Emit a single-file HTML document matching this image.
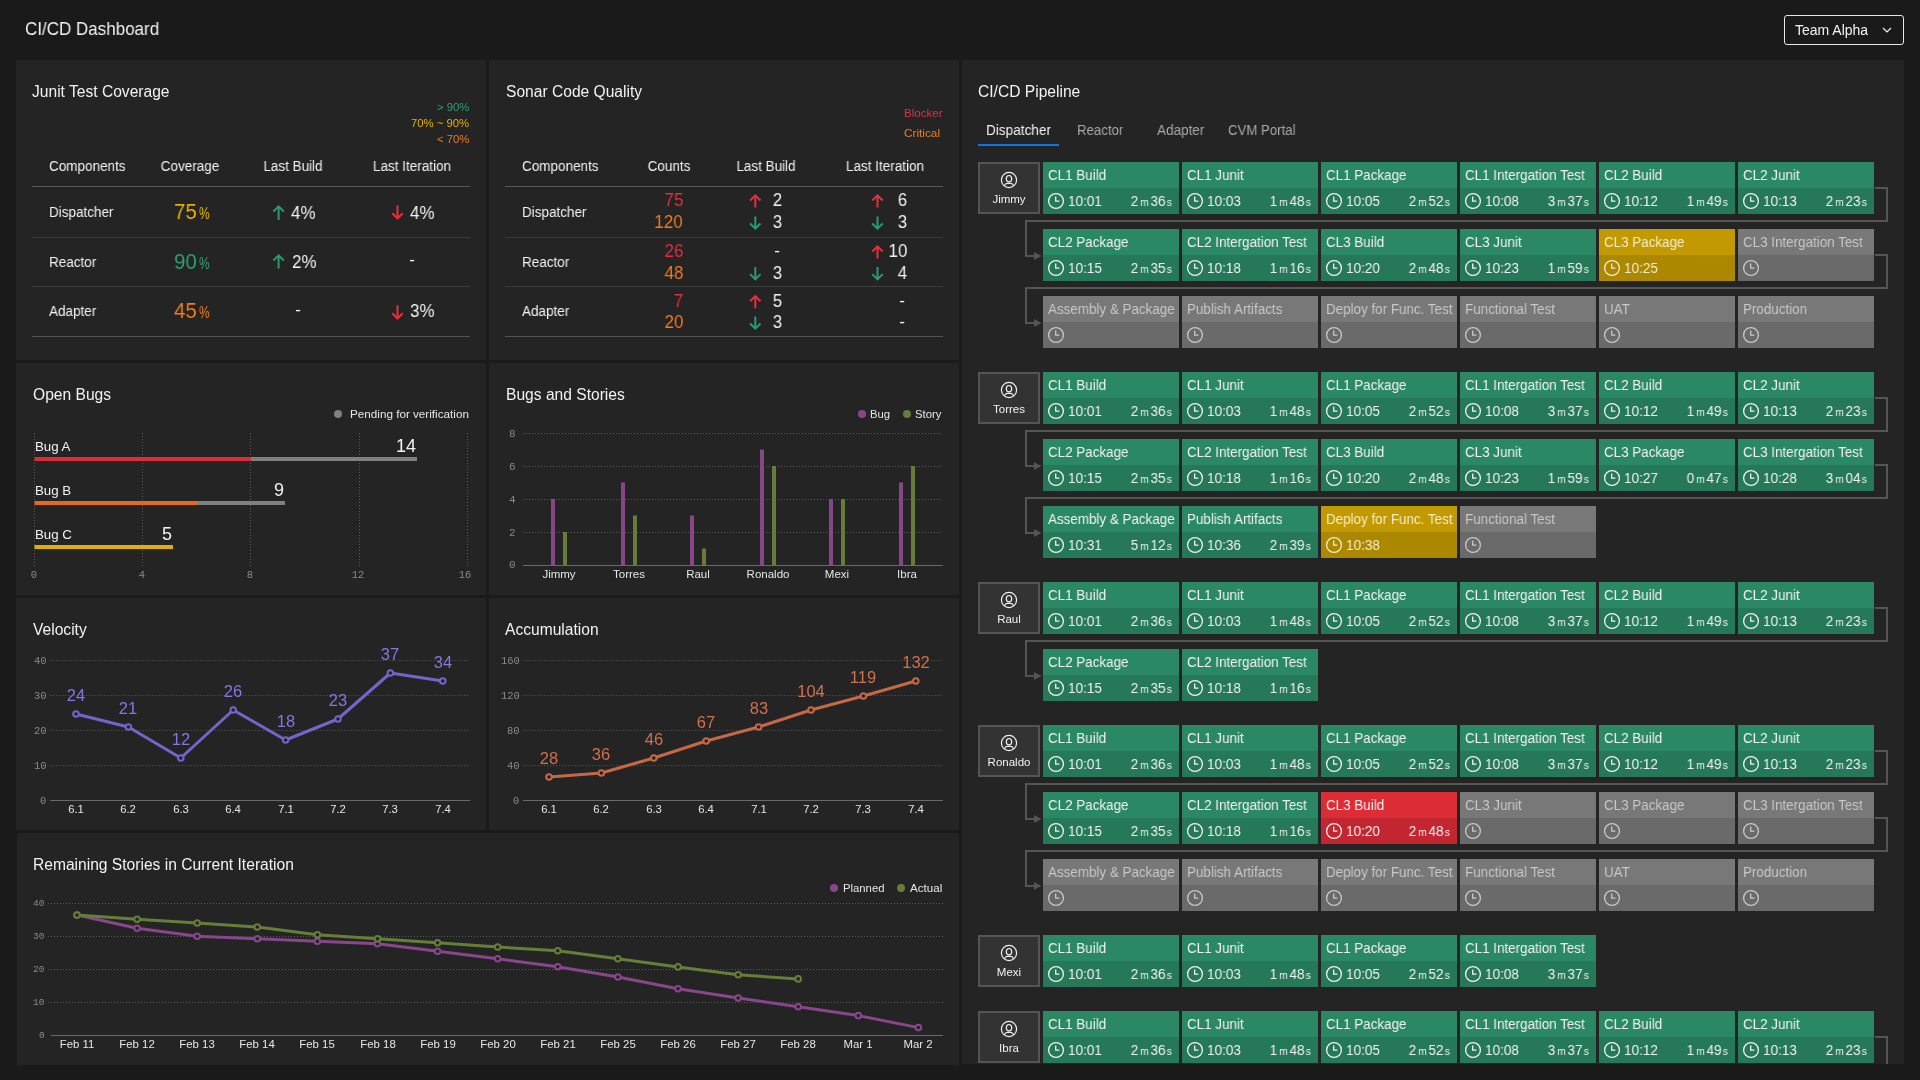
<!DOCTYPE html>
<html><head><meta charset="utf-8"><title>CI/CD Dashboard</title>
<style>
html,body{margin:0;padding:0;}
body{width:1920px;height:1080px;overflow:hidden;background:#1a1a1a;position:relative;font-family:'Liberation Sans', sans-serif;}
.t{position:absolute;line-height:1;white-space:nowrap;will-change:transform;}
.r{position:absolute;}
.panel{position:absolute;background:#242424;}
svg{position:absolute;left:0;top:0;overflow:visible;}
.tile{position:absolute;width:136px;height:52px;}
.tile .h{position:absolute;left:0;top:0;width:136px;height:26px;}
.tile .b{position:absolute;left:0;top:26px;width:136px;height:26px;}
</style></head><body>

<div class="t" style="top:20px;font-size:18.36px;color:#f2f2f2;left:24.50px;transform:scaleX(0.9259);transform-origin:left 0;">CI/CD Dashboard</div>
<div class="r" style="left:1784px;top:15px;width:118px;height:28px;border:1px solid #e8e8e8;border-radius:3px;"></div>
<div class="t" style="top:23px;font-size:14.0px;color:#f2f2f2;left:1794.50px;">Team Alpha</div>
<svg width="1920" height="60" style="left:0;top:0"><polyline points="1883,28 1887,32 1891,28" fill="none" stroke="#f2f2f2" stroke-width="1.2"/></svg>
<div class="panel" style="left:16px;top:60px;width:470px;height:300px;"></div>
<div class="panel" style="left:489px;top:60px;width:470px;height:300px;"></div>
<div class="panel" style="left:16px;top:363px;width:470px;height:232px;"></div>
<div class="panel" style="left:489px;top:363px;width:470px;height:232px;"></div>
<div class="panel" style="left:16px;top:598px;width:470px;height:232px;"></div>
<div class="panel" style="left:489px;top:598px;width:470px;height:232px;"></div>
<div class="panel" style="left:17px;top:833px;width:942px;height:232px;"></div>
<div class="panel" style="left:962px;top:60px;width:942px;height:1004px;"></div>
<div class="t" style="top:84px;font-size:15.6px;color:#f2f2f2;left:32.30px;">Junit Test Coverage</div>
<div class="t" style="top:84px;font-size:15.6px;color:#f2f2f2;left:505.60px;">Sonar Code Quality</div>
<div class="t" style="top:387px;font-size:15.6px;color:#f2f2f2;left:33.00px;">Open Bugs</div>
<div class="t" style="top:387px;font-size:15.6px;color:#f2f2f2;left:505.50px;">Bugs and Stories</div>
<div class="t" style="top:622px;font-size:15.6px;color:#f2f2f2;left:32.50px;">Velocity</div>
<div class="t" style="top:622px;font-size:15.6px;color:#f2f2f2;left:505.00px;">Accumulation</div>
<div class="t" style="top:857px;font-size:15.6px;color:#f2f2f2;left:33.30px;">Remaining Stories in Current Iteration</div>
<div class="t" style="top:84px;font-size:15.6px;color:#f2f2f2;left:978.30px;">CI/CD Pipeline</div>
<div class="t" style="top:102px;font-size:11.3px;color:#2f9f76;right:1450.50px;text-align:right;">&gt; 90%</div>
<div class="t" style="top:118px;font-size:11.3px;color:#e6b000;right:1450.50px;text-align:right;">70% ~ 90%</div>
<div class="t" style="top:134px;font-size:11.3px;color:#ee7a22;right:1450.50px;text-align:right;">&lt; 70%</div>
<div class="t" style="top:159px;font-size:14.72px;color:#f2f2f2;left:48.50px;transform:scaleX(0.9174);transform-origin:left 0;">Components</div>
<div class="t" style="top:159px;font-size:14.72px;color:#f2f2f2;left:40.00px;width:300px;text-align:center;transform:scaleX(0.9174);transform-origin:center 0;">Coverage</div>
<div class="t" style="top:159px;font-size:14.72px;color:#f2f2f2;left:142.50px;width:300px;text-align:center;transform:scaleX(0.9174);transform-origin:center 0;">Last Build</div>
<div class="t" style="top:159px;font-size:14.72px;color:#f2f2f2;left:261.70px;width:300px;text-align:center;transform:scaleX(0.9174);transform-origin:center 0;">Last Iteration</div>
<div class="r" style="left:32px;top:186px;width:438px;height:1px;background:#595959;"></div>
<div class="r" style="left:32px;top:237px;width:438px;height:1px;background:#3b3b3b;"></div>
<div class="r" style="left:32px;top:286px;width:438px;height:1px;background:#3b3b3b;"></div>
<div class="r" style="left:32px;top:336px;width:438px;height:1px;background:#535353;"></div>
<div class="t" style="top:205px;font-size:14.58px;color:#f2f2f2;left:48.50px;transform:scaleX(0.9259);transform-origin:left 0;">Dispatcher</div>
<div class="t" style="top:255px;font-size:14.58px;color:#f2f2f2;left:48.50px;transform:scaleX(0.9259);transform-origin:left 0;">Reactor</div>
<div class="t" style="top:304px;font-size:14.58px;color:#f2f2f2;left:48.50px;transform:scaleX(0.9259);transform-origin:left 0;">Adapter</div>
<div class="t" style="top:201px;font-size:22.55px;color:#e6b000;left:173.50px;transform:scaleX(0.9091);transform-origin:left 0;">75</div>
<div class="t" style="top:206px;font-size:15.6px;color:#e6b000;left:199.40px;transform:scaleX(0.7692);transform-origin:left 0;">%</div>
<div class="t" style="top:251px;font-size:22.55px;color:#2f9f76;left:173.50px;transform:scaleX(0.9091);transform-origin:left 0;">90</div>
<div class="t" style="top:256px;font-size:15.6px;color:#2f9f76;left:199.40px;transform:scaleX(0.7692);transform-origin:left 0;">%</div>
<div class="t" style="top:300px;font-size:22.55px;color:#ee7a22;left:173.50px;transform:scaleX(0.9091);transform-origin:left 0;">45</div>
<div class="t" style="top:305px;font-size:15.6px;color:#ee7a22;left:199.40px;transform:scaleX(0.7692);transform-origin:left 0;">%</div>
<div class="t" style="top:204px;font-size:18.36px;color:#f2f2f2;left:290.50px;transform:scaleX(0.9259);transform-origin:left 0;">4%</div>
<div class="t" style="top:253px;font-size:18.36px;color:#f2f2f2;left:291.50px;transform:scaleX(0.9259);transform-origin:left 0;">2%</div>
<div class="t" style="top:301px;font-size:17.0px;color:#f2f2f2;left:148.40px;width:300px;text-align:center;">-</div>
<div class="t" style="top:204px;font-size:18.36px;color:#f2f2f2;left:409.50px;transform:scaleX(0.9259);transform-origin:left 0;">4%</div>
<div class="t" style="top:251px;font-size:17.0px;color:#f2f2f2;left:262.40px;width:300px;text-align:center;">-</div>
<div class="t" style="top:302px;font-size:18.36px;color:#f2f2f2;left:409.50px;transform:scaleX(0.9259);transform-origin:left 0;">3%</div>
<div class="t" style="top:107px;font-size:11.6px;color:#e3303c;left:903.60px;">Blocker</div>
<div class="t" style="top:128px;font-size:11.8px;color:#ee7a22;left:903.60px;">Critical</div>
<div class="t" style="top:159px;font-size:14.72px;color:#f2f2f2;left:521.50px;transform:scaleX(0.9174);transform-origin:left 0;">Components</div>
<div class="t" style="top:159px;font-size:14.72px;color:#f2f2f2;left:519.20px;width:300px;text-align:center;transform:scaleX(0.9174);transform-origin:center 0;">Counts</div>
<div class="t" style="top:159px;font-size:14.72px;color:#f2f2f2;left:615.60px;width:300px;text-align:center;transform:scaleX(0.9174);transform-origin:center 0;">Last Build</div>
<div class="t" style="top:159px;font-size:14.72px;color:#f2f2f2;left:734.90px;width:300px;text-align:center;transform:scaleX(0.9174);transform-origin:center 0;">Last Iteration</div>
<div class="r" style="left:505px;top:186px;width:438px;height:1px;background:#595959;"></div>
<div class="r" style="left:505px;top:237px;width:438px;height:1px;background:#3b3b3b;"></div>
<div class="r" style="left:505px;top:286px;width:438px;height:1px;background:#3b3b3b;"></div>
<div class="r" style="left:505px;top:336px;width:438px;height:1px;background:#535353;"></div>
<div class="t" style="top:205px;font-size:14.58px;color:#f2f2f2;left:521.50px;transform:scaleX(0.9259);transform-origin:left 0;">Dispatcher</div>
<div class="t" style="top:255px;font-size:14.58px;color:#f2f2f2;left:521.50px;transform:scaleX(0.9259);transform-origin:left 0;">Reactor</div>
<div class="t" style="top:304px;font-size:14.58px;color:#f2f2f2;left:521.50px;transform:scaleX(0.9259);transform-origin:left 0;">Adapter</div>
<div class="t" style="top:191px;font-size:18.36px;color:#e3303c;right:1237.00px;text-align:right;transform:scaleX(0.9259);transform-origin:right 0;">75</div>
<div class="t" style="top:213px;font-size:18.36px;color:#ee7a22;right:1237.00px;text-align:right;transform:scaleX(0.9259);transform-origin:right 0;">120</div>
<div class="t" style="top:242px;font-size:18.36px;color:#e3303c;right:1237.00px;text-align:right;transform:scaleX(0.9259);transform-origin:right 0;">26</div>
<div class="t" style="top:264px;font-size:18.36px;color:#ee7a22;right:1237.00px;text-align:right;transform:scaleX(0.9259);transform-origin:right 0;">48</div>
<div class="t" style="top:292px;font-size:18.36px;color:#e3303c;right:1237.00px;text-align:right;transform:scaleX(0.9259);transform-origin:right 0;">7</div>
<div class="t" style="top:313px;font-size:18.36px;color:#ee7a22;right:1237.00px;text-align:right;transform:scaleX(0.9259);transform-origin:right 0;">20</div>
<div class="t" style="top:191px;font-size:18.36px;color:#f2f2f2;right:1138.00px;text-align:right;transform:scaleX(0.9259);transform-origin:right 0;">2</div>
<div class="t" style="top:191px;font-size:18.36px;color:#f2f2f2;right:1013.00px;text-align:right;transform:scaleX(0.9259);transform-origin:right 0;">6</div>
<div class="t" style="top:213px;font-size:18.36px;color:#f2f2f2;right:1138.00px;text-align:right;transform:scaleX(0.9259);transform-origin:right 0;">3</div>
<div class="t" style="top:213px;font-size:18.36px;color:#f2f2f2;right:1013.00px;text-align:right;transform:scaleX(0.9259);transform-origin:right 0;">3</div>
<div class="t" style="top:242px;font-size:17.0px;color:#f2f2f2;left:627.40px;width:300px;text-align:center;">-</div>
<div class="t" style="top:242px;font-size:18.36px;color:#f2f2f2;right:1013.00px;text-align:right;transform:scaleX(0.9259);transform-origin:right 0;">10</div>
<div class="t" style="top:264px;font-size:18.36px;color:#f2f2f2;right:1138.00px;text-align:right;transform:scaleX(0.9259);transform-origin:right 0;">3</div>
<div class="t" style="top:264px;font-size:18.36px;color:#f2f2f2;right:1013.00px;text-align:right;transform:scaleX(0.9259);transform-origin:right 0;">4</div>
<div class="t" style="top:292px;font-size:18.36px;color:#f2f2f2;right:1138.00px;text-align:right;transform:scaleX(0.9259);transform-origin:right 0;">5</div>
<div class="t" style="top:292px;font-size:17.0px;color:#f2f2f2;left:751.80px;width:300px;text-align:center;">-</div>
<div class="t" style="top:313px;font-size:18.36px;color:#f2f2f2;right:1138.00px;text-align:right;transform:scaleX(0.9259);transform-origin:right 0;">3</div>
<div class="t" style="top:313px;font-size:17.0px;color:#f2f2f2;left:751.80px;width:300px;text-align:center;">-</div>
<svg width="1920" height="400"><path d="M278.6,220.0 L278.6,206.7 M273.40000000000003,211.5 L278.6,206.3 L283.8,211.5" fill="none" stroke="#2a9a70" stroke-width="2"/><path d="M278.6,268.5 L278.6,255.7 M273.40000000000003,260.5 L278.6,255.3 L283.8,260.5" fill="none" stroke="#2a9a70" stroke-width="2"/><path d="M397.5,205.3 L397.5,218.10000000000002 M392.3,213.3 L397.5,218.5 L402.7,213.3" fill="none" stroke="#e5303c" stroke-width="2"/><path d="M397.5,305.3 L397.5,318.1 M392.3,313.3 L397.5,318.5 L402.7,313.3" fill="none" stroke="#e5303c" stroke-width="2"/><path d="M755.3,207.5 L755.3,195.7 M750.0999999999999,200.5 L755.3,195.3 L760.5,200.5" fill="none" stroke="#e5303c" stroke-width="2"/><path d="M877.5,207.5 L877.5,195.7 M872.3,200.5 L877.5,195.3 L882.7,200.5" fill="none" stroke="#e5303c" stroke-width="2"/><path d="M755.3,216.5 L755.3,228.3 M750.0999999999999,223.5 L755.3,228.7 L760.5,223.5" fill="none" stroke="#2a9a70" stroke-width="2"/><path d="M877.5,216.5 L877.5,228.3 M872.3,223.5 L877.5,228.7 L882.7,223.5" fill="none" stroke="#2a9a70" stroke-width="2"/><path d="M877.5,258.5 L877.5,246.7 M872.3,251.5 L877.5,246.3 L882.7,251.5" fill="none" stroke="#e5303c" stroke-width="2"/><path d="M755.3,267.1 L755.3,278.90000000000003 M750.0999999999999,274.1 L755.3,279.3 L760.5,274.1" fill="none" stroke="#2a9a70" stroke-width="2"/><path d="M877.5,267.1 L877.5,278.90000000000003 M872.3,274.1 L877.5,279.3 L882.7,274.1" fill="none" stroke="#2a9a70" stroke-width="2"/><path d="M755.3,308.3 L755.3,296.5 M750.0999999999999,301.3 L755.3,296.1 L760.5,301.3" fill="none" stroke="#e5303c" stroke-width="2"/><path d="M755.3,316.5 L755.3,328.3 M750.0999999999999,323.5 L755.3,328.7 L760.5,323.5" fill="none" stroke="#2a9a70" stroke-width="2"/></svg>
<svg width="1920" height="600"><circle cx="338" cy="414" r="4" fill="#808080"/><line x1="34.5" y1="433" x2="34.5" y2="566" stroke="#5a5a5a" stroke-width="1" stroke-dasharray="1 2"/><line x1="142.5" y1="433" x2="142.5" y2="566" stroke="#5a5a5a" stroke-width="1" stroke-dasharray="1 2"/><line x1="250.5" y1="433" x2="250.5" y2="566" stroke="#5a5a5a" stroke-width="1" stroke-dasharray="1 2"/><line x1="359.5" y1="433" x2="359.5" y2="566" stroke="#5a5a5a" stroke-width="1" stroke-dasharray="1 2"/><line x1="467.5" y1="433" x2="467.5" y2="566" stroke="#5a5a5a" stroke-width="1" stroke-dasharray="1 2"/><rect x="34.5" y="457" width="216.5" height="4" fill="#dc2d37"/><rect x="251" y="457" width="166" height="4" fill="#808080"/><rect x="34.5" y="501" width="162.5" height="4" fill="#e46a1c"/><rect x="197" y="501" width="88" height="4" fill="#808080"/><rect x="34.5" y="545" width="138.5" height="4" fill="#e0b000"/></svg>
<div class="t" style="top:408px;font-size:11.7px;color:#e6e6e6;left:349.80px;">Pending for verification</div>
<div class="t" style="top:440px;font-size:13.3px;color:#f2f2f2;left:35.40px;">Bug A</div>
<div class="t" style="top:484px;font-size:13.3px;color:#f2f2f2;left:35.40px;">Bug B</div>
<div class="t" style="top:528px;font-size:13.3px;color:#f2f2f2;left:35.40px;">Bug C</div>
<div class="t" style="top:437px;font-size:18.0px;color:#f2f2f2;right:1503.50px;text-align:right;">14</div>
<div class="t" style="top:481px;font-size:18.0px;color:#f2f2f2;right:1636.20px;text-align:right;">9</div>
<div class="t" style="top:525px;font-size:18.0px;color:#f2f2f2;right:1748.20px;text-align:right;">5</div>
<div class="t" style="top:570px;font-size:10.5px;color:#8a8a8a;font-family:'Liberation Mono', monospace;left:-115.60px;width:300px;text-align:center;">0</div>
<div class="t" style="top:570px;font-size:10.5px;color:#8a8a8a;font-family:'Liberation Mono', monospace;left:-7.60px;width:300px;text-align:center;">4</div>
<div class="t" style="top:570px;font-size:10.5px;color:#8a8a8a;font-family:'Liberation Mono', monospace;left:100.40px;width:300px;text-align:center;">8</div>
<div class="t" style="top:570px;font-size:10.5px;color:#8a8a8a;font-family:'Liberation Mono', monospace;left:207.90px;width:300px;text-align:center;">12</div>
<div class="t" style="top:570px;font-size:10.5px;color:#8a8a8a;font-family:'Liberation Mono', monospace;left:314.80px;width:300px;text-align:center;">16</div>
<svg width="1920" height="600"><line x1="523" y1="433.5" x2="942" y2="433.5" stroke="#5a5a5a" stroke-width="1" stroke-dasharray="1 2"/><line x1="523" y1="466.5" x2="942" y2="466.5" stroke="#5a5a5a" stroke-width="1" stroke-dasharray="1 2"/><line x1="523" y1="499.5" x2="942" y2="499.5" stroke="#5a5a5a" stroke-width="1" stroke-dasharray="1 2"/><line x1="523" y1="532.5" x2="942" y2="532.5" stroke="#5a5a5a" stroke-width="1" stroke-dasharray="1 2"/><line x1="523" y1="565.5" x2="943" y2="565.5" stroke="#6a6a6a" stroke-width="1"/><rect x="551" y="499.0" width="4" height="66.0" fill="#874787"/><rect x="563" y="532.0" width="4" height="33.0" fill="#677b3b"/><rect x="621" y="482.5" width="4" height="82.5" fill="#874787"/><rect x="633" y="515.5" width="4" height="49.5" fill="#677b3b"/><rect x="690" y="515.5" width="4" height="49.5" fill="#874787"/><rect x="702" y="548.5" width="4" height="16.5" fill="#677b3b"/><rect x="760" y="449.5" width="4" height="115.5" fill="#874787"/><rect x="772" y="466.0" width="4" height="99.0" fill="#677b3b"/><rect x="829" y="499.0" width="4" height="66.0" fill="#874787"/><rect x="841" y="499.0" width="4" height="66.0" fill="#677b3b"/><rect x="899" y="482.5" width="4" height="82.5" fill="#874787"/><rect x="911" y="466.0" width="4" height="99.0" fill="#677b3b"/><circle cx="862" cy="414" r="4" fill="#874787"/><circle cx="907" cy="414" r="4" fill="#677b3b"/></svg>
<div class="t" style="top:409px;font-size:11.3px;color:#e6e6e6;left:870.40px;">Bug</div>
<div class="t" style="top:409px;font-size:11.3px;color:#e6e6e6;left:915.30px;">Story</div>
<div class="t" style="top:429px;font-size:11.0px;color:#8a8a8a;font-family:'Liberation Mono', monospace;right:1404.20px;text-align:right;">8</div>
<div class="t" style="top:462px;font-size:11.0px;color:#8a8a8a;font-family:'Liberation Mono', monospace;right:1404.20px;text-align:right;">6</div>
<div class="t" style="top:495px;font-size:11.0px;color:#8a8a8a;font-family:'Liberation Mono', monospace;right:1404.20px;text-align:right;">4</div>
<div class="t" style="top:528px;font-size:11.0px;color:#8a8a8a;font-family:'Liberation Mono', monospace;right:1404.20px;text-align:right;">2</div>
<div class="t" style="top:560px;font-size:11.0px;color:#8a8a8a;font-family:'Liberation Mono', monospace;right:1404.20px;text-align:right;">0</div>
<div class="t" style="top:569px;font-size:11.5px;color:#e6e6e6;left:409.00px;width:300px;text-align:center;">Jimmy</div>
<div class="t" style="top:569px;font-size:11.5px;color:#e6e6e6;left:479.00px;width:300px;text-align:center;">Torres</div>
<div class="t" style="top:569px;font-size:11.5px;color:#e6e6e6;left:548.00px;width:300px;text-align:center;">Raul</div>
<div class="t" style="top:569px;font-size:11.5px;color:#e6e6e6;left:618.00px;width:300px;text-align:center;">Ronaldo</div>
<div class="t" style="top:569px;font-size:11.5px;color:#e6e6e6;left:687.00px;width:300px;text-align:center;">Mexi</div>
<div class="t" style="top:569px;font-size:11.5px;color:#e6e6e6;left:757.00px;width:300px;text-align:center;">Ibra</div>
<svg width="1920" height="840"><line x1="50.2" y1="660.5" x2="468.5" y2="660.5" stroke="#5a5a5a" stroke-width="1" stroke-dasharray="1 2"/><line x1="50.2" y1="695.5" x2="468.5" y2="695.5" stroke="#5a5a5a" stroke-width="1" stroke-dasharray="1 2"/><line x1="50.2" y1="730.5" x2="468.5" y2="730.5" stroke="#5a5a5a" stroke-width="1" stroke-dasharray="1 2"/><line x1="50.2" y1="765.5" x2="468.5" y2="765.5" stroke="#5a5a5a" stroke-width="1" stroke-dasharray="1 2"/><line x1="50.2" y1="800.5" x2="470.0" y2="800.5" stroke="#6a6a6a" stroke-width="1"/><polyline points="76.0,714 128.4,727 180.8,758 233.2,710 285.6,740 338.0,719 390.4,673 442.8,681" fill="none" stroke="#7664cd" stroke-width="3" stroke-linejoin="round"/><circle cx="76.0" cy="714" r="2.8" fill="#242424" stroke="#7664cd" stroke-width="2"/><circle cx="128.4" cy="727" r="2.8" fill="#242424" stroke="#7664cd" stroke-width="2"/><circle cx="180.8" cy="758" r="2.8" fill="#242424" stroke="#7664cd" stroke-width="2"/><circle cx="233.2" cy="710" r="2.8" fill="#242424" stroke="#7664cd" stroke-width="2"/><circle cx="285.6" cy="740" r="2.8" fill="#242424" stroke="#7664cd" stroke-width="2"/><circle cx="338.0" cy="719" r="2.8" fill="#242424" stroke="#7664cd" stroke-width="2"/><circle cx="390.4" cy="673" r="2.8" fill="#242424" stroke="#7664cd" stroke-width="2"/><circle cx="442.8" cy="681" r="2.8" fill="#242424" stroke="#7664cd" stroke-width="2"/></svg>
<div class="t" style="top:687px;font-size:16.5px;color:#8676e2;left:-74.00px;width:300px;text-align:center;">24</div>
<div class="t" style="top:700px;font-size:16.5px;color:#8676e2;left:-21.60px;width:300px;text-align:center;">21</div>
<div class="t" style="top:731px;font-size:16.5px;color:#8676e2;left:30.80px;width:300px;text-align:center;">12</div>
<div class="t" style="top:683px;font-size:16.5px;color:#8676e2;left:83.20px;width:300px;text-align:center;">26</div>
<div class="t" style="top:713px;font-size:16.5px;color:#8676e2;left:135.60px;width:300px;text-align:center;">18</div>
<div class="t" style="top:692px;font-size:16.5px;color:#8676e2;left:188.00px;width:300px;text-align:center;">23</div>
<div class="t" style="top:646px;font-size:16.5px;color:#8676e2;left:240.40px;width:300px;text-align:center;">37</div>
<div class="t" style="top:654px;font-size:16.5px;color:#8676e2;left:292.80px;width:300px;text-align:center;">34</div>
<div class="t" style="top:656px;font-size:10.5px;color:#8a8a8a;font-family:'Liberation Mono', monospace;right:1873.50px;text-align:right;">40</div>
<div class="t" style="top:691px;font-size:10.5px;color:#8a8a8a;font-family:'Liberation Mono', monospace;right:1873.50px;text-align:right;">30</div>
<div class="t" style="top:726px;font-size:10.5px;color:#8a8a8a;font-family:'Liberation Mono', monospace;right:1873.50px;text-align:right;">20</div>
<div class="t" style="top:761px;font-size:10.5px;color:#8a8a8a;font-family:'Liberation Mono', monospace;right:1873.50px;text-align:right;">10</div>
<div class="t" style="top:796px;font-size:10.5px;color:#8a8a8a;font-family:'Liberation Mono', monospace;right:1873.50px;text-align:right;">0</div>
<div class="t" style="top:804px;font-size:11.3px;color:#e6e6e6;left:-74.00px;width:300px;text-align:center;">6.1</div>
<div class="t" style="top:804px;font-size:11.3px;color:#e6e6e6;left:-21.60px;width:300px;text-align:center;">6.2</div>
<div class="t" style="top:804px;font-size:11.3px;color:#e6e6e6;left:30.80px;width:300px;text-align:center;">6.3</div>
<div class="t" style="top:804px;font-size:11.3px;color:#e6e6e6;left:83.20px;width:300px;text-align:center;">6.4</div>
<div class="t" style="top:804px;font-size:11.3px;color:#e6e6e6;left:135.60px;width:300px;text-align:center;">7.1</div>
<div class="t" style="top:804px;font-size:11.3px;color:#e6e6e6;left:188.00px;width:300px;text-align:center;">7.2</div>
<div class="t" style="top:804px;font-size:11.3px;color:#e6e6e6;left:240.40px;width:300px;text-align:center;">7.3</div>
<div class="t" style="top:804px;font-size:11.3px;color:#e6e6e6;left:292.80px;width:300px;text-align:center;">7.4</div>
<svg width="1920" height="840"><line x1="523.2" y1="660.5" x2="941.5" y2="660.5" stroke="#5a5a5a" stroke-width="1" stroke-dasharray="1 2"/><line x1="523.2" y1="695.5" x2="941.5" y2="695.5" stroke="#5a5a5a" stroke-width="1" stroke-dasharray="1 2"/><line x1="523.2" y1="730.5" x2="941.5" y2="730.5" stroke="#5a5a5a" stroke-width="1" stroke-dasharray="1 2"/><line x1="523.2" y1="765.5" x2="941.5" y2="765.5" stroke="#5a5a5a" stroke-width="1" stroke-dasharray="1 2"/><line x1="523.2" y1="800.5" x2="943.0" y2="800.5" stroke="#6a6a6a" stroke-width="1"/><polyline points="549.0,777 601.4,773 653.8,758 706.2,741 758.6,727 811.0,710 863.4,696 915.8,681" fill="none" stroke="#c66846" stroke-width="3" stroke-linejoin="round"/><circle cx="549.0" cy="777" r="2.8" fill="#242424" stroke="#c66846" stroke-width="2"/><circle cx="601.4" cy="773" r="2.8" fill="#242424" stroke="#c66846" stroke-width="2"/><circle cx="653.8" cy="758" r="2.8" fill="#242424" stroke="#c66846" stroke-width="2"/><circle cx="706.2" cy="741" r="2.8" fill="#242424" stroke="#c66846" stroke-width="2"/><circle cx="758.6" cy="727" r="2.8" fill="#242424" stroke="#c66846" stroke-width="2"/><circle cx="811.0" cy="710" r="2.8" fill="#242424" stroke="#c66846" stroke-width="2"/><circle cx="863.4" cy="696" r="2.8" fill="#242424" stroke="#c66846" stroke-width="2"/><circle cx="915.8" cy="681" r="2.8" fill="#242424" stroke="#c66846" stroke-width="2"/></svg>
<div class="t" style="top:750px;font-size:16.5px;color:#d0704c;left:399.00px;width:300px;text-align:center;">28</div>
<div class="t" style="top:746px;font-size:16.5px;color:#d0704c;left:451.40px;width:300px;text-align:center;">36</div>
<div class="t" style="top:731px;font-size:16.5px;color:#d0704c;left:503.80px;width:300px;text-align:center;">46</div>
<div class="t" style="top:714px;font-size:16.5px;color:#d0704c;left:556.20px;width:300px;text-align:center;">67</div>
<div class="t" style="top:700px;font-size:16.5px;color:#d0704c;left:608.60px;width:300px;text-align:center;">83</div>
<div class="t" style="top:683px;font-size:16.5px;color:#d0704c;left:661.00px;width:300px;text-align:center;">104</div>
<div class="t" style="top:669px;font-size:16.5px;color:#d0704c;left:713.40px;width:300px;text-align:center;">119</div>
<div class="t" style="top:654px;font-size:16.5px;color:#d0704c;left:765.80px;width:300px;text-align:center;">132</div>
<div class="t" style="top:656px;font-size:10.5px;color:#8a8a8a;font-family:'Liberation Mono', monospace;right:1400.50px;text-align:right;">160</div>
<div class="t" style="top:691px;font-size:10.5px;color:#8a8a8a;font-family:'Liberation Mono', monospace;right:1400.50px;text-align:right;">120</div>
<div class="t" style="top:726px;font-size:10.5px;color:#8a8a8a;font-family:'Liberation Mono', monospace;right:1400.50px;text-align:right;">80</div>
<div class="t" style="top:761px;font-size:10.5px;color:#8a8a8a;font-family:'Liberation Mono', monospace;right:1400.50px;text-align:right;">40</div>
<div class="t" style="top:796px;font-size:10.5px;color:#8a8a8a;font-family:'Liberation Mono', monospace;right:1400.50px;text-align:right;">0</div>
<div class="t" style="top:804px;font-size:11.3px;color:#e6e6e6;left:399.00px;width:300px;text-align:center;">6.1</div>
<div class="t" style="top:804px;font-size:11.3px;color:#e6e6e6;left:451.40px;width:300px;text-align:center;">6.2</div>
<div class="t" style="top:804px;font-size:11.3px;color:#e6e6e6;left:503.80px;width:300px;text-align:center;">6.3</div>
<div class="t" style="top:804px;font-size:11.3px;color:#e6e6e6;left:556.20px;width:300px;text-align:center;">6.4</div>
<div class="t" style="top:804px;font-size:11.3px;color:#e6e6e6;left:608.60px;width:300px;text-align:center;">7.1</div>
<div class="t" style="top:804px;font-size:11.3px;color:#e6e6e6;left:661.00px;width:300px;text-align:center;">7.2</div>
<div class="t" style="top:804px;font-size:11.3px;color:#e6e6e6;left:713.40px;width:300px;text-align:center;">7.3</div>
<div class="t" style="top:804px;font-size:11.3px;color:#e6e6e6;left:765.80px;width:300px;text-align:center;">7.4</div>
<svg width="1920" height="1080"><line x1="48" y1="903.5" x2="943" y2="903.5" stroke="#5a5a5a" stroke-width="1" stroke-dasharray="1 2"/><line x1="48" y1="936.5" x2="943" y2="936.5" stroke="#5a5a5a" stroke-width="1" stroke-dasharray="1 2"/><line x1="48" y1="969.5" x2="943" y2="969.5" stroke="#5a5a5a" stroke-width="1" stroke-dasharray="1 2"/><line x1="48" y1="1002.5" x2="943" y2="1002.5" stroke="#5a5a5a" stroke-width="1" stroke-dasharray="1 2"/><line x1="51" y1="1035.5" x2="943" y2="1035.5" stroke="#6a6a6a" stroke-width="1"/><polyline points="77.0,915 137.1,928.3 197.2,936.2 257.3,938.8 317.4,941.2 377.5,943.8 437.6,951.2 497.7,958.8 557.8,966.7 617.9,977 678.0,988.7 738.1,998 798.2,1006.7 858.3,1015.6 918.4,1027.6" fill="none" stroke="#88468b" stroke-width="3" stroke-linejoin="round"/><polyline points="77.0,915 137.1,919.2 197.2,923 257.3,927 317.4,934.7 377.5,938.7 437.6,942.8 497.7,947 557.8,950.8 617.9,958.8 678.0,966.9 738.1,974.8 798.2,978.9" fill="none" stroke="#657f38" stroke-width="3" stroke-linejoin="round"/><circle cx="77.0" cy="915" r="2.8" fill="#242424" stroke="#88468b" stroke-width="2"/><circle cx="137.1" cy="928.3" r="2.8" fill="#242424" stroke="#88468b" stroke-width="2"/><circle cx="197.2" cy="936.2" r="2.8" fill="#242424" stroke="#88468b" stroke-width="2"/><circle cx="257.3" cy="938.8" r="2.8" fill="#242424" stroke="#88468b" stroke-width="2"/><circle cx="317.4" cy="941.2" r="2.8" fill="#242424" stroke="#88468b" stroke-width="2"/><circle cx="377.5" cy="943.8" r="2.8" fill="#242424" stroke="#88468b" stroke-width="2"/><circle cx="437.6" cy="951.2" r="2.8" fill="#242424" stroke="#88468b" stroke-width="2"/><circle cx="497.7" cy="958.8" r="2.8" fill="#242424" stroke="#88468b" stroke-width="2"/><circle cx="557.8" cy="966.7" r="2.8" fill="#242424" stroke="#88468b" stroke-width="2"/><circle cx="617.9" cy="977" r="2.8" fill="#242424" stroke="#88468b" stroke-width="2"/><circle cx="678.0" cy="988.7" r="2.8" fill="#242424" stroke="#88468b" stroke-width="2"/><circle cx="738.1" cy="998" r="2.8" fill="#242424" stroke="#88468b" stroke-width="2"/><circle cx="798.2" cy="1006.7" r="2.8" fill="#242424" stroke="#88468b" stroke-width="2"/><circle cx="858.3" cy="1015.6" r="2.8" fill="#242424" stroke="#88468b" stroke-width="2"/><circle cx="918.4" cy="1027.6" r="2.8" fill="#242424" stroke="#88468b" stroke-width="2"/><circle cx="77.0" cy="915" r="2.8" fill="#242424" stroke="#657f38" stroke-width="2"/><circle cx="137.1" cy="919.2" r="2.8" fill="#242424" stroke="#657f38" stroke-width="2"/><circle cx="197.2" cy="923" r="2.8" fill="#242424" stroke="#657f38" stroke-width="2"/><circle cx="257.3" cy="927" r="2.8" fill="#242424" stroke="#657f38" stroke-width="2"/><circle cx="317.4" cy="934.7" r="2.8" fill="#242424" stroke="#657f38" stroke-width="2"/><circle cx="377.5" cy="938.7" r="2.8" fill="#242424" stroke="#657f38" stroke-width="2"/><circle cx="437.6" cy="942.8" r="2.8" fill="#242424" stroke="#657f38" stroke-width="2"/><circle cx="497.7" cy="947" r="2.8" fill="#242424" stroke="#657f38" stroke-width="2"/><circle cx="557.8" cy="950.8" r="2.8" fill="#242424" stroke="#657f38" stroke-width="2"/><circle cx="617.9" cy="958.8" r="2.8" fill="#242424" stroke="#657f38" stroke-width="2"/><circle cx="678.0" cy="966.9" r="2.8" fill="#242424" stroke="#657f38" stroke-width="2"/><circle cx="738.1" cy="974.8" r="2.8" fill="#242424" stroke="#657f38" stroke-width="2"/><circle cx="798.2" cy="978.9" r="2.8" fill="#242424" stroke="#657f38" stroke-width="2"/><circle cx="834" cy="888" r="4" fill="#88468b"/><circle cx="901" cy="888" r="4" fill="#657f38"/></svg>
<div class="t" style="top:883px;font-size:11.3px;color:#e6e6e6;left:842.60px;">Planned</div>
<div class="t" style="top:882px;font-size:11.6px;color:#e6e6e6;left:910.20px;">Actual</div>
<div class="t" style="top:899px;font-size:9.5px;color:#8a8a8a;font-family:'Liberation Mono', monospace;right:1875.20px;text-align:right;">40</div>
<div class="t" style="top:932px;font-size:9.5px;color:#8a8a8a;font-family:'Liberation Mono', monospace;right:1875.20px;text-align:right;">30</div>
<div class="t" style="top:965px;font-size:9.5px;color:#8a8a8a;font-family:'Liberation Mono', monospace;right:1875.20px;text-align:right;">20</div>
<div class="t" style="top:998px;font-size:9.5px;color:#8a8a8a;font-family:'Liberation Mono', monospace;right:1875.20px;text-align:right;">10</div>
<div class="t" style="top:1031px;font-size:9.5px;color:#8a8a8a;font-family:'Liberation Mono', monospace;right:1875.20px;text-align:right;">0</div>
<div class="t" style="top:1039px;font-size:11.4px;color:#e6e6e6;left:-73.00px;width:300px;text-align:center;">Feb 11</div>
<div class="t" style="top:1039px;font-size:11.4px;color:#e6e6e6;left:-12.90px;width:300px;text-align:center;">Feb 12</div>
<div class="t" style="top:1039px;font-size:11.4px;color:#e6e6e6;left:47.20px;width:300px;text-align:center;">Feb 13</div>
<div class="t" style="top:1039px;font-size:11.4px;color:#e6e6e6;left:107.30px;width:300px;text-align:center;">Feb 14</div>
<div class="t" style="top:1039px;font-size:11.4px;color:#e6e6e6;left:167.40px;width:300px;text-align:center;">Feb 15</div>
<div class="t" style="top:1039px;font-size:11.4px;color:#e6e6e6;left:227.50px;width:300px;text-align:center;">Feb 18</div>
<div class="t" style="top:1039px;font-size:11.4px;color:#e6e6e6;left:287.60px;width:300px;text-align:center;">Feb 19</div>
<div class="t" style="top:1039px;font-size:11.4px;color:#e6e6e6;left:347.70px;width:300px;text-align:center;">Feb 20</div>
<div class="t" style="top:1039px;font-size:11.4px;color:#e6e6e6;left:407.80px;width:300px;text-align:center;">Feb 21</div>
<div class="t" style="top:1039px;font-size:11.4px;color:#e6e6e6;left:467.90px;width:300px;text-align:center;">Feb 25</div>
<div class="t" style="top:1039px;font-size:11.4px;color:#e6e6e6;left:528.00px;width:300px;text-align:center;">Feb 26</div>
<div class="t" style="top:1039px;font-size:11.4px;color:#e6e6e6;left:588.10px;width:300px;text-align:center;">Feb 27</div>
<div class="t" style="top:1039px;font-size:11.4px;color:#e6e6e6;left:648.20px;width:300px;text-align:center;">Feb 28</div>
<div class="t" style="top:1039px;font-size:11.4px;color:#e6e6e6;left:708.30px;width:300px;text-align:center;">Mar 1</div>
<div class="t" style="top:1039px;font-size:11.4px;color:#e6e6e6;left:768.40px;width:300px;text-align:center;">Mar 2</div>
<div class="t" style="top:123px;font-size:14.96px;color:#f2f2f2;left:985.90px;transform:scaleX(0.9091);transform-origin:left 0;">Dispatcher</div>
<div class="t" style="top:123px;font-size:14.52px;color:#a8a8a8;left:1076.80px;transform:scaleX(0.9091);transform-origin:left 0;">Reactor</div>
<div class="t" style="top:123px;font-size:14.85px;color:#a8a8a8;left:1156.80px;transform:scaleX(0.9091);transform-origin:left 0;">Adapter</div>
<div class="t" style="top:123px;font-size:14.52px;color:#a8a8a8;left:1227.70px;transform:scaleX(0.9091);transform-origin:left 0;">CVM Portal</div>
<div class="r" style="left:978px;top:144px;width:81px;height:2px;background:#1174e6;"></div>
<div style="position:absolute;left:962px;top:60px;width:942px;height:1004px;overflow:hidden;"><div style="position:absolute;left:-962px;top:-60px;width:1920px;height:1080px;">
<div class="r" style="left:978px;top:162px;width:58px;height:48px;border:2px solid #555;background:#333;"></div><div class="tile" style="left:1043px;top:162px;"><div class="h" style="background:#2a8964"></div><div class="b" style="background:#257858"></div></div><div class="tile" style="left:1182px;top:162px;"><div class="h" style="background:#2a8964"></div><div class="b" style="background:#257858"></div></div><div class="tile" style="left:1321px;top:162px;"><div class="h" style="background:#2a8964"></div><div class="b" style="background:#257858"></div></div><div class="tile" style="left:1460px;top:162px;"><div class="h" style="background:#2a8964"></div><div class="b" style="background:#257858"></div></div><div class="tile" style="left:1599px;top:162px;"><div class="h" style="background:#2a8964"></div><div class="b" style="background:#257858"></div></div><div class="tile" style="left:1738px;top:162px;"><div class="h" style="background:#2a8964"></div><div class="b" style="background:#257858"></div></div><div class="tile" style="left:1043px;top:229px;"><div class="h" style="background:#2a8964"></div><div class="b" style="background:#257858"></div></div><div class="tile" style="left:1182px;top:229px;"><div class="h" style="background:#2a8964"></div><div class="b" style="background:#257858"></div></div><div class="tile" style="left:1321px;top:229px;"><div class="h" style="background:#2a8964"></div><div class="b" style="background:#257858"></div></div><div class="tile" style="left:1460px;top:229px;"><div class="h" style="background:#2a8964"></div><div class="b" style="background:#257858"></div></div><div class="tile" style="left:1599px;top:229px;"><div class="h" style="background:#c29a00"></div><div class="b" style="background:#ab8800"></div></div><div class="tile" style="left:1738px;top:229px;"><div class="h" style="background:#787878"></div><div class="b" style="background:#6a6a6a"></div></div><div class="tile" style="left:1043px;top:296px;"><div class="h" style="background:#787878"></div><div class="b" style="background:#6a6a6a"></div></div><div class="tile" style="left:1182px;top:296px;"><div class="h" style="background:#787878"></div><div class="b" style="background:#6a6a6a"></div></div><div class="tile" style="left:1321px;top:296px;"><div class="h" style="background:#787878"></div><div class="b" style="background:#6a6a6a"></div></div><div class="tile" style="left:1460px;top:296px;"><div class="h" style="background:#787878"></div><div class="b" style="background:#6a6a6a"></div></div><div class="tile" style="left:1599px;top:296px;"><div class="h" style="background:#787878"></div><div class="b" style="background:#6a6a6a"></div></div><div class="tile" style="left:1738px;top:296px;"><div class="h" style="background:#787878"></div><div class="b" style="background:#6a6a6a"></div></div><div class="r" style="left:978px;top:372px;width:58px;height:48px;border:2px solid #555;background:#333;"></div><div class="tile" style="left:1043px;top:372px;"><div class="h" style="background:#2a8964"></div><div class="b" style="background:#257858"></div></div><div class="tile" style="left:1182px;top:372px;"><div class="h" style="background:#2a8964"></div><div class="b" style="background:#257858"></div></div><div class="tile" style="left:1321px;top:372px;"><div class="h" style="background:#2a8964"></div><div class="b" style="background:#257858"></div></div><div class="tile" style="left:1460px;top:372px;"><div class="h" style="background:#2a8964"></div><div class="b" style="background:#257858"></div></div><div class="tile" style="left:1599px;top:372px;"><div class="h" style="background:#2a8964"></div><div class="b" style="background:#257858"></div></div><div class="tile" style="left:1738px;top:372px;"><div class="h" style="background:#2a8964"></div><div class="b" style="background:#257858"></div></div><div class="tile" style="left:1043px;top:439px;"><div class="h" style="background:#2a8964"></div><div class="b" style="background:#257858"></div></div><div class="tile" style="left:1182px;top:439px;"><div class="h" style="background:#2a8964"></div><div class="b" style="background:#257858"></div></div><div class="tile" style="left:1321px;top:439px;"><div class="h" style="background:#2a8964"></div><div class="b" style="background:#257858"></div></div><div class="tile" style="left:1460px;top:439px;"><div class="h" style="background:#2a8964"></div><div class="b" style="background:#257858"></div></div><div class="tile" style="left:1599px;top:439px;"><div class="h" style="background:#2a8964"></div><div class="b" style="background:#257858"></div></div><div class="tile" style="left:1738px;top:439px;"><div class="h" style="background:#2a8964"></div><div class="b" style="background:#257858"></div></div><div class="tile" style="left:1043px;top:506px;"><div class="h" style="background:#2a8964"></div><div class="b" style="background:#257858"></div></div><div class="tile" style="left:1182px;top:506px;"><div class="h" style="background:#2a8964"></div><div class="b" style="background:#257858"></div></div><div class="tile" style="left:1321px;top:506px;"><div class="h" style="background:#c29a00"></div><div class="b" style="background:#ab8800"></div></div><div class="tile" style="left:1460px;top:506px;"><div class="h" style="background:#787878"></div><div class="b" style="background:#6a6a6a"></div></div><div class="r" style="left:978px;top:582px;width:58px;height:48px;border:2px solid #555;background:#333;"></div><div class="tile" style="left:1043px;top:582px;"><div class="h" style="background:#2a8964"></div><div class="b" style="background:#257858"></div></div><div class="tile" style="left:1182px;top:582px;"><div class="h" style="background:#2a8964"></div><div class="b" style="background:#257858"></div></div><div class="tile" style="left:1321px;top:582px;"><div class="h" style="background:#2a8964"></div><div class="b" style="background:#257858"></div></div><div class="tile" style="left:1460px;top:582px;"><div class="h" style="background:#2a8964"></div><div class="b" style="background:#257858"></div></div><div class="tile" style="left:1599px;top:582px;"><div class="h" style="background:#2a8964"></div><div class="b" style="background:#257858"></div></div><div class="tile" style="left:1738px;top:582px;"><div class="h" style="background:#2a8964"></div><div class="b" style="background:#257858"></div></div><div class="tile" style="left:1043px;top:649px;"><div class="h" style="background:#2a8964"></div><div class="b" style="background:#257858"></div></div><div class="tile" style="left:1182px;top:649px;"><div class="h" style="background:#2a8964"></div><div class="b" style="background:#257858"></div></div><div class="r" style="left:978px;top:725px;width:58px;height:48px;border:2px solid #555;background:#333;"></div><div class="tile" style="left:1043px;top:725px;"><div class="h" style="background:#2a8964"></div><div class="b" style="background:#257858"></div></div><div class="tile" style="left:1182px;top:725px;"><div class="h" style="background:#2a8964"></div><div class="b" style="background:#257858"></div></div><div class="tile" style="left:1321px;top:725px;"><div class="h" style="background:#2a8964"></div><div class="b" style="background:#257858"></div></div><div class="tile" style="left:1460px;top:725px;"><div class="h" style="background:#2a8964"></div><div class="b" style="background:#257858"></div></div><div class="tile" style="left:1599px;top:725px;"><div class="h" style="background:#2a8964"></div><div class="b" style="background:#257858"></div></div><div class="tile" style="left:1738px;top:725px;"><div class="h" style="background:#2a8964"></div><div class="b" style="background:#257858"></div></div><div class="tile" style="left:1043px;top:792px;"><div class="h" style="background:#2a8964"></div><div class="b" style="background:#257858"></div></div><div class="tile" style="left:1182px;top:792px;"><div class="h" style="background:#2a8964"></div><div class="b" style="background:#257858"></div></div><div class="tile" style="left:1321px;top:792px;"><div class="h" style="background:#dc2d37"></div><div class="b" style="background:#c22731"></div></div><div class="tile" style="left:1460px;top:792px;"><div class="h" style="background:#787878"></div><div class="b" style="background:#6a6a6a"></div></div><div class="tile" style="left:1599px;top:792px;"><div class="h" style="background:#787878"></div><div class="b" style="background:#6a6a6a"></div></div><div class="tile" style="left:1738px;top:792px;"><div class="h" style="background:#787878"></div><div class="b" style="background:#6a6a6a"></div></div><div class="tile" style="left:1043px;top:859px;"><div class="h" style="background:#787878"></div><div class="b" style="background:#6a6a6a"></div></div><div class="tile" style="left:1182px;top:859px;"><div class="h" style="background:#787878"></div><div class="b" style="background:#6a6a6a"></div></div><div class="tile" style="left:1321px;top:859px;"><div class="h" style="background:#787878"></div><div class="b" style="background:#6a6a6a"></div></div><div class="tile" style="left:1460px;top:859px;"><div class="h" style="background:#787878"></div><div class="b" style="background:#6a6a6a"></div></div><div class="tile" style="left:1599px;top:859px;"><div class="h" style="background:#787878"></div><div class="b" style="background:#6a6a6a"></div></div><div class="tile" style="left:1738px;top:859px;"><div class="h" style="background:#787878"></div><div class="b" style="background:#6a6a6a"></div></div><div class="r" style="left:978px;top:935px;width:58px;height:48px;border:2px solid #555;background:#333;"></div><div class="tile" style="left:1043px;top:935px;"><div class="h" style="background:#2a8964"></div><div class="b" style="background:#257858"></div></div><div class="tile" style="left:1182px;top:935px;"><div class="h" style="background:#2a8964"></div><div class="b" style="background:#257858"></div></div><div class="tile" style="left:1321px;top:935px;"><div class="h" style="background:#2a8964"></div><div class="b" style="background:#257858"></div></div><div class="tile" style="left:1460px;top:935px;"><div class="h" style="background:#2a8964"></div><div class="b" style="background:#257858"></div></div><div class="r" style="left:978px;top:1011px;width:58px;height:48px;border:2px solid #555;background:#333;"></div><div class="tile" style="left:1043px;top:1011px;"><div class="h" style="background:#2a8964"></div><div class="b" style="background:#257858"></div></div><div class="tile" style="left:1182px;top:1011px;"><div class="h" style="background:#2a8964"></div><div class="b" style="background:#257858"></div></div><div class="tile" style="left:1321px;top:1011px;"><div class="h" style="background:#2a8964"></div><div class="b" style="background:#257858"></div></div><div class="tile" style="left:1460px;top:1011px;"><div class="h" style="background:#2a8964"></div><div class="b" style="background:#257858"></div></div><div class="tile" style="left:1599px;top:1011px;"><div class="h" style="background:#2a8964"></div><div class="b" style="background:#257858"></div></div><div class="tile" style="left:1738px;top:1011px;"><div class="h" style="background:#2a8964"></div><div class="b" style="background:#257858"></div></div><div class="tile" style="left:1043px;top:1078px;"><div class="h" style="background:#2a8964"></div><div class="b" style="background:#257858"></div></div><div class="tile" style="left:1182px;top:1078px;"><div class="h" style="background:#2a8964"></div><div class="b" style="background:#257858"></div></div><div class="tile" style="left:1321px;top:1078px;"><div class="h" style="background:#2a8964"></div><div class="b" style="background:#257858"></div></div><div class="tile" style="left:1460px;top:1078px;"><div class="h" style="background:#2a8964"></div><div class="b" style="background:#257858"></div></div>
<svg width="1920" height="1080"><circle cx="1009" cy="180" r="7.6" fill="none" stroke="#f0f0f0" stroke-width="1.2"/><ellipse cx="1009" cy="178.7" rx="2.7" ry="3.2" fill="none" stroke="#f0f0f0" stroke-width="1.2"/><path d="M1004.4,185.9 Q1005.4,183.4 1007.2,183.4 H1010.8 Q1012.6,183.4 1013.6,185.9" fill="none" stroke="#f0f0f0" stroke-width="1.2"/><circle cx="1056" cy="201" r="7.4" fill="none" stroke="#f2f2f2" stroke-width="1.3"/><path d="M1055.7,196.4 V201.2 H1059.4" fill="none" stroke="#f2f2f2" stroke-width="1.3"/><circle cx="1195" cy="201" r="7.4" fill="none" stroke="#f2f2f2" stroke-width="1.3"/><path d="M1194.7,196.4 V201.2 H1198.4" fill="none" stroke="#f2f2f2" stroke-width="1.3"/><circle cx="1334" cy="201" r="7.4" fill="none" stroke="#f2f2f2" stroke-width="1.3"/><path d="M1333.7,196.4 V201.2 H1337.4" fill="none" stroke="#f2f2f2" stroke-width="1.3"/><circle cx="1473" cy="201" r="7.4" fill="none" stroke="#f2f2f2" stroke-width="1.3"/><path d="M1472.7,196.4 V201.2 H1476.4" fill="none" stroke="#f2f2f2" stroke-width="1.3"/><circle cx="1612" cy="201" r="7.4" fill="none" stroke="#f2f2f2" stroke-width="1.3"/><path d="M1611.7,196.4 V201.2 H1615.4" fill="none" stroke="#f2f2f2" stroke-width="1.3"/><circle cx="1751" cy="201" r="7.4" fill="none" stroke="#f2f2f2" stroke-width="1.3"/><path d="M1750.7,196.4 V201.2 H1754.4" fill="none" stroke="#f2f2f2" stroke-width="1.3"/><path d="M1875,188 H1887 V221 H1026 V256 H1035" fill="none" stroke="#555555" stroke-width="2"/><path d="M1034,252 L1041.5,256 L1034,260 Z" fill="#555555"/><circle cx="1056" cy="268" r="7.4" fill="none" stroke="#f2f2f2" stroke-width="1.3"/><path d="M1055.7,263.4 V268.2 H1059.4" fill="none" stroke="#f2f2f2" stroke-width="1.3"/><circle cx="1195" cy="268" r="7.4" fill="none" stroke="#f2f2f2" stroke-width="1.3"/><path d="M1194.7,263.4 V268.2 H1198.4" fill="none" stroke="#f2f2f2" stroke-width="1.3"/><circle cx="1334" cy="268" r="7.4" fill="none" stroke="#f2f2f2" stroke-width="1.3"/><path d="M1333.7,263.4 V268.2 H1337.4" fill="none" stroke="#f2f2f2" stroke-width="1.3"/><circle cx="1473" cy="268" r="7.4" fill="none" stroke="#f2f2f2" stroke-width="1.3"/><path d="M1472.7,263.4 V268.2 H1476.4" fill="none" stroke="#f2f2f2" stroke-width="1.3"/><circle cx="1612" cy="268" r="7.4" fill="none" stroke="#f6eccc" stroke-width="1.3"/><path d="M1611.7,263.4 V268.2 H1615.4" fill="none" stroke="#f6eccc" stroke-width="1.3"/><circle cx="1751" cy="268" r="7.4" fill="none" stroke="#c8c8c8" stroke-width="1.3"/><path d="M1750.7,263.4 V268.2 H1754.4" fill="none" stroke="#c8c8c8" stroke-width="1.3"/><path d="M1875,255 H1887 V288 H1026 V323 H1035" fill="none" stroke="#555555" stroke-width="2"/><path d="M1034,319 L1041.5,323 L1034,327 Z" fill="#555555"/><circle cx="1056" cy="335" r="7.4" fill="none" stroke="#c8c8c8" stroke-width="1.3"/><path d="M1055.7,330.4 V335.2 H1059.4" fill="none" stroke="#c8c8c8" stroke-width="1.3"/><circle cx="1195" cy="335" r="7.4" fill="none" stroke="#c8c8c8" stroke-width="1.3"/><path d="M1194.7,330.4 V335.2 H1198.4" fill="none" stroke="#c8c8c8" stroke-width="1.3"/><circle cx="1334" cy="335" r="7.4" fill="none" stroke="#c8c8c8" stroke-width="1.3"/><path d="M1333.7,330.4 V335.2 H1337.4" fill="none" stroke="#c8c8c8" stroke-width="1.3"/><circle cx="1473" cy="335" r="7.4" fill="none" stroke="#c8c8c8" stroke-width="1.3"/><path d="M1472.7,330.4 V335.2 H1476.4" fill="none" stroke="#c8c8c8" stroke-width="1.3"/><circle cx="1612" cy="335" r="7.4" fill="none" stroke="#c8c8c8" stroke-width="1.3"/><path d="M1611.7,330.4 V335.2 H1615.4" fill="none" stroke="#c8c8c8" stroke-width="1.3"/><circle cx="1751" cy="335" r="7.4" fill="none" stroke="#c8c8c8" stroke-width="1.3"/><path d="M1750.7,330.4 V335.2 H1754.4" fill="none" stroke="#c8c8c8" stroke-width="1.3"/><circle cx="1009" cy="390" r="7.6" fill="none" stroke="#f0f0f0" stroke-width="1.2"/><ellipse cx="1009" cy="388.7" rx="2.7" ry="3.2" fill="none" stroke="#f0f0f0" stroke-width="1.2"/><path d="M1004.4,395.9 Q1005.4,393.4 1007.2,393.4 H1010.8 Q1012.6,393.4 1013.6,395.9" fill="none" stroke="#f0f0f0" stroke-width="1.2"/><circle cx="1056" cy="411" r="7.4" fill="none" stroke="#f2f2f2" stroke-width="1.3"/><path d="M1055.7,406.4 V411.2 H1059.4" fill="none" stroke="#f2f2f2" stroke-width="1.3"/><circle cx="1195" cy="411" r="7.4" fill="none" stroke="#f2f2f2" stroke-width="1.3"/><path d="M1194.7,406.4 V411.2 H1198.4" fill="none" stroke="#f2f2f2" stroke-width="1.3"/><circle cx="1334" cy="411" r="7.4" fill="none" stroke="#f2f2f2" stroke-width="1.3"/><path d="M1333.7,406.4 V411.2 H1337.4" fill="none" stroke="#f2f2f2" stroke-width="1.3"/><circle cx="1473" cy="411" r="7.4" fill="none" stroke="#f2f2f2" stroke-width="1.3"/><path d="M1472.7,406.4 V411.2 H1476.4" fill="none" stroke="#f2f2f2" stroke-width="1.3"/><circle cx="1612" cy="411" r="7.4" fill="none" stroke="#f2f2f2" stroke-width="1.3"/><path d="M1611.7,406.4 V411.2 H1615.4" fill="none" stroke="#f2f2f2" stroke-width="1.3"/><circle cx="1751" cy="411" r="7.4" fill="none" stroke="#f2f2f2" stroke-width="1.3"/><path d="M1750.7,406.4 V411.2 H1754.4" fill="none" stroke="#f2f2f2" stroke-width="1.3"/><path d="M1875,398 H1887 V431 H1026 V466 H1035" fill="none" stroke="#555555" stroke-width="2"/><path d="M1034,462 L1041.5,466 L1034,470 Z" fill="#555555"/><circle cx="1056" cy="478" r="7.4" fill="none" stroke="#f2f2f2" stroke-width="1.3"/><path d="M1055.7,473.4 V478.2 H1059.4" fill="none" stroke="#f2f2f2" stroke-width="1.3"/><circle cx="1195" cy="478" r="7.4" fill="none" stroke="#f2f2f2" stroke-width="1.3"/><path d="M1194.7,473.4 V478.2 H1198.4" fill="none" stroke="#f2f2f2" stroke-width="1.3"/><circle cx="1334" cy="478" r="7.4" fill="none" stroke="#f2f2f2" stroke-width="1.3"/><path d="M1333.7,473.4 V478.2 H1337.4" fill="none" stroke="#f2f2f2" stroke-width="1.3"/><circle cx="1473" cy="478" r="7.4" fill="none" stroke="#f2f2f2" stroke-width="1.3"/><path d="M1472.7,473.4 V478.2 H1476.4" fill="none" stroke="#f2f2f2" stroke-width="1.3"/><circle cx="1612" cy="478" r="7.4" fill="none" stroke="#f2f2f2" stroke-width="1.3"/><path d="M1611.7,473.4 V478.2 H1615.4" fill="none" stroke="#f2f2f2" stroke-width="1.3"/><circle cx="1751" cy="478" r="7.4" fill="none" stroke="#f2f2f2" stroke-width="1.3"/><path d="M1750.7,473.4 V478.2 H1754.4" fill="none" stroke="#f2f2f2" stroke-width="1.3"/><path d="M1875,465 H1887 V498 H1026 V533 H1035" fill="none" stroke="#555555" stroke-width="2"/><path d="M1034,529 L1041.5,533 L1034,537 Z" fill="#555555"/><circle cx="1056" cy="545" r="7.4" fill="none" stroke="#f2f2f2" stroke-width="1.3"/><path d="M1055.7,540.4 V545.2 H1059.4" fill="none" stroke="#f2f2f2" stroke-width="1.3"/><circle cx="1195" cy="545" r="7.4" fill="none" stroke="#f2f2f2" stroke-width="1.3"/><path d="M1194.7,540.4 V545.2 H1198.4" fill="none" stroke="#f2f2f2" stroke-width="1.3"/><circle cx="1334" cy="545" r="7.4" fill="none" stroke="#f6eccc" stroke-width="1.3"/><path d="M1333.7,540.4 V545.2 H1337.4" fill="none" stroke="#f6eccc" stroke-width="1.3"/><circle cx="1473" cy="545" r="7.4" fill="none" stroke="#c8c8c8" stroke-width="1.3"/><path d="M1472.7,540.4 V545.2 H1476.4" fill="none" stroke="#c8c8c8" stroke-width="1.3"/><circle cx="1009" cy="600" r="7.6" fill="none" stroke="#f0f0f0" stroke-width="1.2"/><ellipse cx="1009" cy="598.7" rx="2.7" ry="3.2" fill="none" stroke="#f0f0f0" stroke-width="1.2"/><path d="M1004.4,605.9 Q1005.4,603.4 1007.2,603.4 H1010.8 Q1012.6,603.4 1013.6,605.9" fill="none" stroke="#f0f0f0" stroke-width="1.2"/><circle cx="1056" cy="621" r="7.4" fill="none" stroke="#f2f2f2" stroke-width="1.3"/><path d="M1055.7,616.4 V621.2 H1059.4" fill="none" stroke="#f2f2f2" stroke-width="1.3"/><circle cx="1195" cy="621" r="7.4" fill="none" stroke="#f2f2f2" stroke-width="1.3"/><path d="M1194.7,616.4 V621.2 H1198.4" fill="none" stroke="#f2f2f2" stroke-width="1.3"/><circle cx="1334" cy="621" r="7.4" fill="none" stroke="#f2f2f2" stroke-width="1.3"/><path d="M1333.7,616.4 V621.2 H1337.4" fill="none" stroke="#f2f2f2" stroke-width="1.3"/><circle cx="1473" cy="621" r="7.4" fill="none" stroke="#f2f2f2" stroke-width="1.3"/><path d="M1472.7,616.4 V621.2 H1476.4" fill="none" stroke="#f2f2f2" stroke-width="1.3"/><circle cx="1612" cy="621" r="7.4" fill="none" stroke="#f2f2f2" stroke-width="1.3"/><path d="M1611.7,616.4 V621.2 H1615.4" fill="none" stroke="#f2f2f2" stroke-width="1.3"/><circle cx="1751" cy="621" r="7.4" fill="none" stroke="#f2f2f2" stroke-width="1.3"/><path d="M1750.7,616.4 V621.2 H1754.4" fill="none" stroke="#f2f2f2" stroke-width="1.3"/><path d="M1875,608 H1887 V641 H1026 V676 H1035" fill="none" stroke="#555555" stroke-width="2"/><path d="M1034,672 L1041.5,676 L1034,680 Z" fill="#555555"/><circle cx="1056" cy="688" r="7.4" fill="none" stroke="#f2f2f2" stroke-width="1.3"/><path d="M1055.7,683.4 V688.2 H1059.4" fill="none" stroke="#f2f2f2" stroke-width="1.3"/><circle cx="1195" cy="688" r="7.4" fill="none" stroke="#f2f2f2" stroke-width="1.3"/><path d="M1194.7,683.4 V688.2 H1198.4" fill="none" stroke="#f2f2f2" stroke-width="1.3"/><circle cx="1009" cy="743" r="7.6" fill="none" stroke="#f0f0f0" stroke-width="1.2"/><ellipse cx="1009" cy="741.7" rx="2.7" ry="3.2" fill="none" stroke="#f0f0f0" stroke-width="1.2"/><path d="M1004.4,748.9 Q1005.4,746.4 1007.2,746.4 H1010.8 Q1012.6,746.4 1013.6,748.9" fill="none" stroke="#f0f0f0" stroke-width="1.2"/><circle cx="1056" cy="764" r="7.4" fill="none" stroke="#f2f2f2" stroke-width="1.3"/><path d="M1055.7,759.4 V764.2 H1059.4" fill="none" stroke="#f2f2f2" stroke-width="1.3"/><circle cx="1195" cy="764" r="7.4" fill="none" stroke="#f2f2f2" stroke-width="1.3"/><path d="M1194.7,759.4 V764.2 H1198.4" fill="none" stroke="#f2f2f2" stroke-width="1.3"/><circle cx="1334" cy="764" r="7.4" fill="none" stroke="#f2f2f2" stroke-width="1.3"/><path d="M1333.7,759.4 V764.2 H1337.4" fill="none" stroke="#f2f2f2" stroke-width="1.3"/><circle cx="1473" cy="764" r="7.4" fill="none" stroke="#f2f2f2" stroke-width="1.3"/><path d="M1472.7,759.4 V764.2 H1476.4" fill="none" stroke="#f2f2f2" stroke-width="1.3"/><circle cx="1612" cy="764" r="7.4" fill="none" stroke="#f2f2f2" stroke-width="1.3"/><path d="M1611.7,759.4 V764.2 H1615.4" fill="none" stroke="#f2f2f2" stroke-width="1.3"/><circle cx="1751" cy="764" r="7.4" fill="none" stroke="#f2f2f2" stroke-width="1.3"/><path d="M1750.7,759.4 V764.2 H1754.4" fill="none" stroke="#f2f2f2" stroke-width="1.3"/><path d="M1875,751 H1887 V784 H1026 V819 H1035" fill="none" stroke="#555555" stroke-width="2"/><path d="M1034,815 L1041.5,819 L1034,823 Z" fill="#555555"/><circle cx="1056" cy="831" r="7.4" fill="none" stroke="#f2f2f2" stroke-width="1.3"/><path d="M1055.7,826.4 V831.2 H1059.4" fill="none" stroke="#f2f2f2" stroke-width="1.3"/><circle cx="1195" cy="831" r="7.4" fill="none" stroke="#f2f2f2" stroke-width="1.3"/><path d="M1194.7,826.4 V831.2 H1198.4" fill="none" stroke="#f2f2f2" stroke-width="1.3"/><circle cx="1334" cy="831" r="7.4" fill="none" stroke="#f2f2f2" stroke-width="1.3"/><path d="M1333.7,826.4 V831.2 H1337.4" fill="none" stroke="#f2f2f2" stroke-width="1.3"/><circle cx="1473" cy="831" r="7.4" fill="none" stroke="#c8c8c8" stroke-width="1.3"/><path d="M1472.7,826.4 V831.2 H1476.4" fill="none" stroke="#c8c8c8" stroke-width="1.3"/><circle cx="1612" cy="831" r="7.4" fill="none" stroke="#c8c8c8" stroke-width="1.3"/><path d="M1611.7,826.4 V831.2 H1615.4" fill="none" stroke="#c8c8c8" stroke-width="1.3"/><circle cx="1751" cy="831" r="7.4" fill="none" stroke="#c8c8c8" stroke-width="1.3"/><path d="M1750.7,826.4 V831.2 H1754.4" fill="none" stroke="#c8c8c8" stroke-width="1.3"/><path d="M1875,818 H1887 V851 H1026 V886 H1035" fill="none" stroke="#555555" stroke-width="2"/><path d="M1034,882 L1041.5,886 L1034,890 Z" fill="#555555"/><circle cx="1056" cy="898" r="7.4" fill="none" stroke="#c8c8c8" stroke-width="1.3"/><path d="M1055.7,893.4 V898.2 H1059.4" fill="none" stroke="#c8c8c8" stroke-width="1.3"/><circle cx="1195" cy="898" r="7.4" fill="none" stroke="#c8c8c8" stroke-width="1.3"/><path d="M1194.7,893.4 V898.2 H1198.4" fill="none" stroke="#c8c8c8" stroke-width="1.3"/><circle cx="1334" cy="898" r="7.4" fill="none" stroke="#c8c8c8" stroke-width="1.3"/><path d="M1333.7,893.4 V898.2 H1337.4" fill="none" stroke="#c8c8c8" stroke-width="1.3"/><circle cx="1473" cy="898" r="7.4" fill="none" stroke="#c8c8c8" stroke-width="1.3"/><path d="M1472.7,893.4 V898.2 H1476.4" fill="none" stroke="#c8c8c8" stroke-width="1.3"/><circle cx="1612" cy="898" r="7.4" fill="none" stroke="#c8c8c8" stroke-width="1.3"/><path d="M1611.7,893.4 V898.2 H1615.4" fill="none" stroke="#c8c8c8" stroke-width="1.3"/><circle cx="1751" cy="898" r="7.4" fill="none" stroke="#c8c8c8" stroke-width="1.3"/><path d="M1750.7,893.4 V898.2 H1754.4" fill="none" stroke="#c8c8c8" stroke-width="1.3"/><circle cx="1009" cy="953" r="7.6" fill="none" stroke="#f0f0f0" stroke-width="1.2"/><ellipse cx="1009" cy="951.7" rx="2.7" ry="3.2" fill="none" stroke="#f0f0f0" stroke-width="1.2"/><path d="M1004.4,958.9 Q1005.4,956.4 1007.2,956.4 H1010.8 Q1012.6,956.4 1013.6,958.9" fill="none" stroke="#f0f0f0" stroke-width="1.2"/><circle cx="1056" cy="974" r="7.4" fill="none" stroke="#f2f2f2" stroke-width="1.3"/><path d="M1055.7,969.4 V974.2 H1059.4" fill="none" stroke="#f2f2f2" stroke-width="1.3"/><circle cx="1195" cy="974" r="7.4" fill="none" stroke="#f2f2f2" stroke-width="1.3"/><path d="M1194.7,969.4 V974.2 H1198.4" fill="none" stroke="#f2f2f2" stroke-width="1.3"/><circle cx="1334" cy="974" r="7.4" fill="none" stroke="#f2f2f2" stroke-width="1.3"/><path d="M1333.7,969.4 V974.2 H1337.4" fill="none" stroke="#f2f2f2" stroke-width="1.3"/><circle cx="1473" cy="974" r="7.4" fill="none" stroke="#f2f2f2" stroke-width="1.3"/><path d="M1472.7,969.4 V974.2 H1476.4" fill="none" stroke="#f2f2f2" stroke-width="1.3"/><circle cx="1009" cy="1029" r="7.6" fill="none" stroke="#f0f0f0" stroke-width="1.2"/><ellipse cx="1009" cy="1027.7" rx="2.7" ry="3.2" fill="none" stroke="#f0f0f0" stroke-width="1.2"/><path d="M1004.4,1034.9 Q1005.4,1032.4 1007.2,1032.4 H1010.8 Q1012.6,1032.4 1013.6,1034.9" fill="none" stroke="#f0f0f0" stroke-width="1.2"/><circle cx="1056" cy="1050" r="7.4" fill="none" stroke="#f2f2f2" stroke-width="1.3"/><path d="M1055.7,1045.4 V1050.2 H1059.4" fill="none" stroke="#f2f2f2" stroke-width="1.3"/><circle cx="1195" cy="1050" r="7.4" fill="none" stroke="#f2f2f2" stroke-width="1.3"/><path d="M1194.7,1045.4 V1050.2 H1198.4" fill="none" stroke="#f2f2f2" stroke-width="1.3"/><circle cx="1334" cy="1050" r="7.4" fill="none" stroke="#f2f2f2" stroke-width="1.3"/><path d="M1333.7,1045.4 V1050.2 H1337.4" fill="none" stroke="#f2f2f2" stroke-width="1.3"/><circle cx="1473" cy="1050" r="7.4" fill="none" stroke="#f2f2f2" stroke-width="1.3"/><path d="M1472.7,1045.4 V1050.2 H1476.4" fill="none" stroke="#f2f2f2" stroke-width="1.3"/><circle cx="1612" cy="1050" r="7.4" fill="none" stroke="#f2f2f2" stroke-width="1.3"/><path d="M1611.7,1045.4 V1050.2 H1615.4" fill="none" stroke="#f2f2f2" stroke-width="1.3"/><circle cx="1751" cy="1050" r="7.4" fill="none" stroke="#f2f2f2" stroke-width="1.3"/><path d="M1750.7,1045.4 V1050.2 H1754.4" fill="none" stroke="#f2f2f2" stroke-width="1.3"/><path d="M1875,1037 H1887 V1070 H1026 V1105 H1035" fill="none" stroke="#555555" stroke-width="2"/><path d="M1034,1101 L1041.5,1105 L1034,1109 Z" fill="#555555"/><circle cx="1056" cy="1117" r="7.4" fill="none" stroke="#f2f2f2" stroke-width="1.3"/><path d="M1055.7,1112.4 V1117.2 H1059.4" fill="none" stroke="#f2f2f2" stroke-width="1.3"/><circle cx="1195" cy="1117" r="7.4" fill="none" stroke="#f2f2f2" stroke-width="1.3"/><path d="M1194.7,1112.4 V1117.2 H1198.4" fill="none" stroke="#f2f2f2" stroke-width="1.3"/><circle cx="1334" cy="1117" r="7.4" fill="none" stroke="#f2f2f2" stroke-width="1.3"/><path d="M1333.7,1112.4 V1117.2 H1337.4" fill="none" stroke="#f2f2f2" stroke-width="1.3"/><circle cx="1473" cy="1117" r="7.4" fill="none" stroke="#f2f2f2" stroke-width="1.3"/><path d="M1472.7,1112.4 V1117.2 H1476.4" fill="none" stroke="#f2f2f2" stroke-width="1.3"/><path d="M1875,1037 H1887 V1070" fill="none" stroke="#555555" stroke-width="2"/></svg>
<div class="t" style="top:194px;font-size:11.5px;color:#f2f2f2;left:859.00px;width:300px;text-align:center;">Jimmy</div><div class="t" style="top:168px;font-size:14.61px;color:#f2f2f2;left:1048.40px;transform:scaleX(0.9174);transform-origin:left 0;">CL1 Build</div><div class="t" style="top:194px;font-size:14.82px;color:#f2f2f2;left:1067.90px;transform:scaleX(0.9174);transform-origin:left 0;">10:01</div><div class="t" style="right:747.5999999999999px;top:194px;font-size:14.82px;color:#f2f2f2;text-align:right;transform:scaleX(0.9174);transform-origin:right 0">2<span style="font-size:11.45px;margin:0 1.7px 0 2px">m</span>36<span style="font-size:11.45px;margin-left:1.3px">s</span></div><div class="t" style="top:168px;font-size:14.61px;color:#f2f2f2;left:1187.40px;transform:scaleX(0.9174);transform-origin:left 0;">CL1 Junit</div><div class="t" style="top:194px;font-size:14.82px;color:#f2f2f2;left:1206.90px;transform:scaleX(0.9174);transform-origin:left 0;">10:03</div><div class="t" style="right:608.5999999999999px;top:194px;font-size:14.82px;color:#f2f2f2;text-align:right;transform:scaleX(0.9174);transform-origin:right 0">1<span style="font-size:11.45px;margin:0 1.7px 0 2px">m</span>48<span style="font-size:11.45px;margin-left:1.3px">s</span></div><div class="t" style="top:168px;font-size:14.61px;color:#f2f2f2;left:1326.40px;transform:scaleX(0.9174);transform-origin:left 0;">CL1 Package</div><div class="t" style="top:194px;font-size:14.82px;color:#f2f2f2;left:1345.90px;transform:scaleX(0.9174);transform-origin:left 0;">10:05</div><div class="t" style="right:469.5999999999999px;top:194px;font-size:14.82px;color:#f2f2f2;text-align:right;transform:scaleX(0.9174);transform-origin:right 0">2<span style="font-size:11.45px;margin:0 1.7px 0 2px">m</span>52<span style="font-size:11.45px;margin-left:1.3px">s</span></div><div class="t" style="top:168px;font-size:14.61px;color:#f2f2f2;left:1465.40px;transform:scaleX(0.9174);transform-origin:left 0;">CL1 Intergation Test</div><div class="t" style="top:194px;font-size:14.82px;color:#f2f2f2;left:1484.90px;transform:scaleX(0.9174);transform-origin:left 0;">10:08</div><div class="t" style="right:330.5999999999999px;top:194px;font-size:14.82px;color:#f2f2f2;text-align:right;transform:scaleX(0.9174);transform-origin:right 0">3<span style="font-size:11.45px;margin:0 1.7px 0 2px">m</span>37<span style="font-size:11.45px;margin-left:1.3px">s</span></div><div class="t" style="top:168px;font-size:14.61px;color:#f2f2f2;left:1604.40px;transform:scaleX(0.9174);transform-origin:left 0;">CL2 Build</div><div class="t" style="top:194px;font-size:14.82px;color:#f2f2f2;left:1623.90px;transform:scaleX(0.9174);transform-origin:left 0;">10:12</div><div class="t" style="right:191.5999999999999px;top:194px;font-size:14.82px;color:#f2f2f2;text-align:right;transform:scaleX(0.9174);transform-origin:right 0">1<span style="font-size:11.45px;margin:0 1.7px 0 2px">m</span>49<span style="font-size:11.45px;margin-left:1.3px">s</span></div><div class="t" style="top:168px;font-size:14.61px;color:#f2f2f2;left:1743.40px;transform:scaleX(0.9174);transform-origin:left 0;">CL2 Junit</div><div class="t" style="top:194px;font-size:14.82px;color:#f2f2f2;left:1762.90px;transform:scaleX(0.9174);transform-origin:left 0;">10:13</div><div class="t" style="right:52.59999999999991px;top:194px;font-size:14.82px;color:#f2f2f2;text-align:right;transform:scaleX(0.9174);transform-origin:right 0">2<span style="font-size:11.45px;margin:0 1.7px 0 2px">m</span>23<span style="font-size:11.45px;margin-left:1.3px">s</span></div><div class="t" style="top:235px;font-size:14.61px;color:#f2f2f2;left:1048.40px;transform:scaleX(0.9174);transform-origin:left 0;">CL2 Package</div><div class="t" style="top:261px;font-size:14.82px;color:#f2f2f2;left:1067.90px;transform:scaleX(0.9174);transform-origin:left 0;">10:15</div><div class="t" style="right:747.5999999999999px;top:261px;font-size:14.82px;color:#f2f2f2;text-align:right;transform:scaleX(0.9174);transform-origin:right 0">2<span style="font-size:11.45px;margin:0 1.7px 0 2px">m</span>35<span style="font-size:11.45px;margin-left:1.3px">s</span></div><div class="t" style="top:235px;font-size:14.61px;color:#f2f2f2;left:1187.40px;transform:scaleX(0.9174);transform-origin:left 0;">CL2 Intergation Test</div><div class="t" style="top:261px;font-size:14.82px;color:#f2f2f2;left:1206.90px;transform:scaleX(0.9174);transform-origin:left 0;">10:18</div><div class="t" style="right:608.5999999999999px;top:261px;font-size:14.82px;color:#f2f2f2;text-align:right;transform:scaleX(0.9174);transform-origin:right 0">1<span style="font-size:11.45px;margin:0 1.7px 0 2px">m</span>16<span style="font-size:11.45px;margin-left:1.3px">s</span></div><div class="t" style="top:235px;font-size:14.61px;color:#f2f2f2;left:1326.40px;transform:scaleX(0.9174);transform-origin:left 0;">CL3 Build</div><div class="t" style="top:261px;font-size:14.82px;color:#f2f2f2;left:1345.90px;transform:scaleX(0.9174);transform-origin:left 0;">10:20</div><div class="t" style="right:469.5999999999999px;top:261px;font-size:14.82px;color:#f2f2f2;text-align:right;transform:scaleX(0.9174);transform-origin:right 0">2<span style="font-size:11.45px;margin:0 1.7px 0 2px">m</span>48<span style="font-size:11.45px;margin-left:1.3px">s</span></div><div class="t" style="top:235px;font-size:14.61px;color:#f2f2f2;left:1465.40px;transform:scaleX(0.9174);transform-origin:left 0;">CL3 Junit</div><div class="t" style="top:261px;font-size:14.82px;color:#f2f2f2;left:1484.90px;transform:scaleX(0.9174);transform-origin:left 0;">10:23</div><div class="t" style="right:330.5999999999999px;top:261px;font-size:14.82px;color:#f2f2f2;text-align:right;transform:scaleX(0.9174);transform-origin:right 0">1<span style="font-size:11.45px;margin:0 1.7px 0 2px">m</span>59<span style="font-size:11.45px;margin-left:1.3px">s</span></div><div class="t" style="top:235px;font-size:14.61px;color:#f6eccc;left:1604.40px;transform:scaleX(0.9174);transform-origin:left 0;">CL3 Package</div><div class="t" style="top:261px;font-size:14.82px;color:#f6eccc;left:1623.90px;transform:scaleX(0.9174);transform-origin:left 0;">10:25</div><div class="t" style="top:235px;font-size:14.61px;color:#c8c8c8;left:1743.40px;transform:scaleX(0.9174);transform-origin:left 0;">CL3 Intergation Test</div><div class="t" style="top:302px;font-size:14.61px;color:#c8c8c8;left:1048.40px;transform:scaleX(0.9174);transform-origin:left 0;">Assembly &amp; Package</div><div class="t" style="top:302px;font-size:14.61px;color:#c8c8c8;left:1187.40px;transform:scaleX(0.9174);transform-origin:left 0;">Publish Artifacts</div><div class="t" style="top:302px;font-size:14.61px;color:#c8c8c8;left:1326.40px;transform:scaleX(0.9174);transform-origin:left 0;">Deploy for Func. Test</div><div class="t" style="top:302px;font-size:14.61px;color:#c8c8c8;left:1465.40px;transform:scaleX(0.9174);transform-origin:left 0;">Functional Test</div><div class="t" style="top:302px;font-size:14.61px;color:#c8c8c8;left:1604.40px;transform:scaleX(0.9174);transform-origin:left 0;">UAT</div><div class="t" style="top:302px;font-size:14.61px;color:#c8c8c8;left:1743.40px;transform:scaleX(0.9174);transform-origin:left 0;">Production</div><div class="t" style="top:404px;font-size:11.5px;color:#f2f2f2;left:859.00px;width:300px;text-align:center;">Torres</div><div class="t" style="top:378px;font-size:14.61px;color:#f2f2f2;left:1048.40px;transform:scaleX(0.9174);transform-origin:left 0;">CL1 Build</div><div class="t" style="top:404px;font-size:14.82px;color:#f2f2f2;left:1067.90px;transform:scaleX(0.9174);transform-origin:left 0;">10:01</div><div class="t" style="right:747.5999999999999px;top:404px;font-size:14.82px;color:#f2f2f2;text-align:right;transform:scaleX(0.9174);transform-origin:right 0">2<span style="font-size:11.45px;margin:0 1.7px 0 2px">m</span>36<span style="font-size:11.45px;margin-left:1.3px">s</span></div><div class="t" style="top:378px;font-size:14.61px;color:#f2f2f2;left:1187.40px;transform:scaleX(0.9174);transform-origin:left 0;">CL1 Junit</div><div class="t" style="top:404px;font-size:14.82px;color:#f2f2f2;left:1206.90px;transform:scaleX(0.9174);transform-origin:left 0;">10:03</div><div class="t" style="right:608.5999999999999px;top:404px;font-size:14.82px;color:#f2f2f2;text-align:right;transform:scaleX(0.9174);transform-origin:right 0">1<span style="font-size:11.45px;margin:0 1.7px 0 2px">m</span>48<span style="font-size:11.45px;margin-left:1.3px">s</span></div><div class="t" style="top:378px;font-size:14.61px;color:#f2f2f2;left:1326.40px;transform:scaleX(0.9174);transform-origin:left 0;">CL1 Package</div><div class="t" style="top:404px;font-size:14.82px;color:#f2f2f2;left:1345.90px;transform:scaleX(0.9174);transform-origin:left 0;">10:05</div><div class="t" style="right:469.5999999999999px;top:404px;font-size:14.82px;color:#f2f2f2;text-align:right;transform:scaleX(0.9174);transform-origin:right 0">2<span style="font-size:11.45px;margin:0 1.7px 0 2px">m</span>52<span style="font-size:11.45px;margin-left:1.3px">s</span></div><div class="t" style="top:378px;font-size:14.61px;color:#f2f2f2;left:1465.40px;transform:scaleX(0.9174);transform-origin:left 0;">CL1 Intergation Test</div><div class="t" style="top:404px;font-size:14.82px;color:#f2f2f2;left:1484.90px;transform:scaleX(0.9174);transform-origin:left 0;">10:08</div><div class="t" style="right:330.5999999999999px;top:404px;font-size:14.82px;color:#f2f2f2;text-align:right;transform:scaleX(0.9174);transform-origin:right 0">3<span style="font-size:11.45px;margin:0 1.7px 0 2px">m</span>37<span style="font-size:11.45px;margin-left:1.3px">s</span></div><div class="t" style="top:378px;font-size:14.61px;color:#f2f2f2;left:1604.40px;transform:scaleX(0.9174);transform-origin:left 0;">CL2 Build</div><div class="t" style="top:404px;font-size:14.82px;color:#f2f2f2;left:1623.90px;transform:scaleX(0.9174);transform-origin:left 0;">10:12</div><div class="t" style="right:191.5999999999999px;top:404px;font-size:14.82px;color:#f2f2f2;text-align:right;transform:scaleX(0.9174);transform-origin:right 0">1<span style="font-size:11.45px;margin:0 1.7px 0 2px">m</span>49<span style="font-size:11.45px;margin-left:1.3px">s</span></div><div class="t" style="top:378px;font-size:14.61px;color:#f2f2f2;left:1743.40px;transform:scaleX(0.9174);transform-origin:left 0;">CL2 Junit</div><div class="t" style="top:404px;font-size:14.82px;color:#f2f2f2;left:1762.90px;transform:scaleX(0.9174);transform-origin:left 0;">10:13</div><div class="t" style="right:52.59999999999991px;top:404px;font-size:14.82px;color:#f2f2f2;text-align:right;transform:scaleX(0.9174);transform-origin:right 0">2<span style="font-size:11.45px;margin:0 1.7px 0 2px">m</span>23<span style="font-size:11.45px;margin-left:1.3px">s</span></div><div class="t" style="top:445px;font-size:14.61px;color:#f2f2f2;left:1048.40px;transform:scaleX(0.9174);transform-origin:left 0;">CL2 Package</div><div class="t" style="top:471px;font-size:14.82px;color:#f2f2f2;left:1067.90px;transform:scaleX(0.9174);transform-origin:left 0;">10:15</div><div class="t" style="right:747.5999999999999px;top:471px;font-size:14.82px;color:#f2f2f2;text-align:right;transform:scaleX(0.9174);transform-origin:right 0">2<span style="font-size:11.45px;margin:0 1.7px 0 2px">m</span>35<span style="font-size:11.45px;margin-left:1.3px">s</span></div><div class="t" style="top:445px;font-size:14.61px;color:#f2f2f2;left:1187.40px;transform:scaleX(0.9174);transform-origin:left 0;">CL2 Intergation Test</div><div class="t" style="top:471px;font-size:14.82px;color:#f2f2f2;left:1206.90px;transform:scaleX(0.9174);transform-origin:left 0;">10:18</div><div class="t" style="right:608.5999999999999px;top:471px;font-size:14.82px;color:#f2f2f2;text-align:right;transform:scaleX(0.9174);transform-origin:right 0">1<span style="font-size:11.45px;margin:0 1.7px 0 2px">m</span>16<span style="font-size:11.45px;margin-left:1.3px">s</span></div><div class="t" style="top:445px;font-size:14.61px;color:#f2f2f2;left:1326.40px;transform:scaleX(0.9174);transform-origin:left 0;">CL3 Build</div><div class="t" style="top:471px;font-size:14.82px;color:#f2f2f2;left:1345.90px;transform:scaleX(0.9174);transform-origin:left 0;">10:20</div><div class="t" style="right:469.5999999999999px;top:471px;font-size:14.82px;color:#f2f2f2;text-align:right;transform:scaleX(0.9174);transform-origin:right 0">2<span style="font-size:11.45px;margin:0 1.7px 0 2px">m</span>48<span style="font-size:11.45px;margin-left:1.3px">s</span></div><div class="t" style="top:445px;font-size:14.61px;color:#f2f2f2;left:1465.40px;transform:scaleX(0.9174);transform-origin:left 0;">CL3 Junit</div><div class="t" style="top:471px;font-size:14.82px;color:#f2f2f2;left:1484.90px;transform:scaleX(0.9174);transform-origin:left 0;">10:23</div><div class="t" style="right:330.5999999999999px;top:471px;font-size:14.82px;color:#f2f2f2;text-align:right;transform:scaleX(0.9174);transform-origin:right 0">1<span style="font-size:11.45px;margin:0 1.7px 0 2px">m</span>59<span style="font-size:11.45px;margin-left:1.3px">s</span></div><div class="t" style="top:445px;font-size:14.61px;color:#f2f2f2;left:1604.40px;transform:scaleX(0.9174);transform-origin:left 0;">CL3 Package</div><div class="t" style="top:471px;font-size:14.82px;color:#f2f2f2;left:1623.90px;transform:scaleX(0.9174);transform-origin:left 0;">10:27</div><div class="t" style="right:191.5999999999999px;top:471px;font-size:14.82px;color:#f2f2f2;text-align:right;transform:scaleX(0.9174);transform-origin:right 0">0<span style="font-size:11.45px;margin:0 1.7px 0 2px">m</span>47<span style="font-size:11.45px;margin-left:1.3px">s</span></div><div class="t" style="top:445px;font-size:14.61px;color:#f2f2f2;left:1743.40px;transform:scaleX(0.9174);transform-origin:left 0;">CL3 Intergation Test</div><div class="t" style="top:471px;font-size:14.82px;color:#f2f2f2;left:1762.90px;transform:scaleX(0.9174);transform-origin:left 0;">10:28</div><div class="t" style="right:52.59999999999991px;top:471px;font-size:14.82px;color:#f2f2f2;text-align:right;transform:scaleX(0.9174);transform-origin:right 0">3<span style="font-size:11.45px;margin:0 1.7px 0 2px">m</span>04<span style="font-size:11.45px;margin-left:1.3px">s</span></div><div class="t" style="top:512px;font-size:14.61px;color:#f2f2f2;left:1048.40px;transform:scaleX(0.9174);transform-origin:left 0;">Assembly &amp; Package</div><div class="t" style="top:538px;font-size:14.82px;color:#f2f2f2;left:1067.90px;transform:scaleX(0.9174);transform-origin:left 0;">10:31</div><div class="t" style="right:747.5999999999999px;top:538px;font-size:14.82px;color:#f2f2f2;text-align:right;transform:scaleX(0.9174);transform-origin:right 0">5<span style="font-size:11.45px;margin:0 1.7px 0 2px">m</span>12<span style="font-size:11.45px;margin-left:1.3px">s</span></div><div class="t" style="top:512px;font-size:14.61px;color:#f2f2f2;left:1187.40px;transform:scaleX(0.9174);transform-origin:left 0;">Publish Artifacts</div><div class="t" style="top:538px;font-size:14.82px;color:#f2f2f2;left:1206.90px;transform:scaleX(0.9174);transform-origin:left 0;">10:36</div><div class="t" style="right:608.5999999999999px;top:538px;font-size:14.82px;color:#f2f2f2;text-align:right;transform:scaleX(0.9174);transform-origin:right 0">2<span style="font-size:11.45px;margin:0 1.7px 0 2px">m</span>39<span style="font-size:11.45px;margin-left:1.3px">s</span></div><div class="t" style="top:512px;font-size:14.61px;color:#f6eccc;left:1326.40px;transform:scaleX(0.9174);transform-origin:left 0;">Deploy for Func. Test</div><div class="t" style="top:538px;font-size:14.82px;color:#f6eccc;left:1345.90px;transform:scaleX(0.9174);transform-origin:left 0;">10:38</div><div class="t" style="top:512px;font-size:14.61px;color:#c8c8c8;left:1465.40px;transform:scaleX(0.9174);transform-origin:left 0;">Functional Test</div><div class="t" style="top:614px;font-size:11.5px;color:#f2f2f2;left:859.00px;width:300px;text-align:center;">Raul</div><div class="t" style="top:588px;font-size:14.61px;color:#f2f2f2;left:1048.40px;transform:scaleX(0.9174);transform-origin:left 0;">CL1 Build</div><div class="t" style="top:614px;font-size:14.82px;color:#f2f2f2;left:1067.90px;transform:scaleX(0.9174);transform-origin:left 0;">10:01</div><div class="t" style="right:747.5999999999999px;top:614px;font-size:14.82px;color:#f2f2f2;text-align:right;transform:scaleX(0.9174);transform-origin:right 0">2<span style="font-size:11.45px;margin:0 1.7px 0 2px">m</span>36<span style="font-size:11.45px;margin-left:1.3px">s</span></div><div class="t" style="top:588px;font-size:14.61px;color:#f2f2f2;left:1187.40px;transform:scaleX(0.9174);transform-origin:left 0;">CL1 Junit</div><div class="t" style="top:614px;font-size:14.82px;color:#f2f2f2;left:1206.90px;transform:scaleX(0.9174);transform-origin:left 0;">10:03</div><div class="t" style="right:608.5999999999999px;top:614px;font-size:14.82px;color:#f2f2f2;text-align:right;transform:scaleX(0.9174);transform-origin:right 0">1<span style="font-size:11.45px;margin:0 1.7px 0 2px">m</span>48<span style="font-size:11.45px;margin-left:1.3px">s</span></div><div class="t" style="top:588px;font-size:14.61px;color:#f2f2f2;left:1326.40px;transform:scaleX(0.9174);transform-origin:left 0;">CL1 Package</div><div class="t" style="top:614px;font-size:14.82px;color:#f2f2f2;left:1345.90px;transform:scaleX(0.9174);transform-origin:left 0;">10:05</div><div class="t" style="right:469.5999999999999px;top:614px;font-size:14.82px;color:#f2f2f2;text-align:right;transform:scaleX(0.9174);transform-origin:right 0">2<span style="font-size:11.45px;margin:0 1.7px 0 2px">m</span>52<span style="font-size:11.45px;margin-left:1.3px">s</span></div><div class="t" style="top:588px;font-size:14.61px;color:#f2f2f2;left:1465.40px;transform:scaleX(0.9174);transform-origin:left 0;">CL1 Intergation Test</div><div class="t" style="top:614px;font-size:14.82px;color:#f2f2f2;left:1484.90px;transform:scaleX(0.9174);transform-origin:left 0;">10:08</div><div class="t" style="right:330.5999999999999px;top:614px;font-size:14.82px;color:#f2f2f2;text-align:right;transform:scaleX(0.9174);transform-origin:right 0">3<span style="font-size:11.45px;margin:0 1.7px 0 2px">m</span>37<span style="font-size:11.45px;margin-left:1.3px">s</span></div><div class="t" style="top:588px;font-size:14.61px;color:#f2f2f2;left:1604.40px;transform:scaleX(0.9174);transform-origin:left 0;">CL2 Build</div><div class="t" style="top:614px;font-size:14.82px;color:#f2f2f2;left:1623.90px;transform:scaleX(0.9174);transform-origin:left 0;">10:12</div><div class="t" style="right:191.5999999999999px;top:614px;font-size:14.82px;color:#f2f2f2;text-align:right;transform:scaleX(0.9174);transform-origin:right 0">1<span style="font-size:11.45px;margin:0 1.7px 0 2px">m</span>49<span style="font-size:11.45px;margin-left:1.3px">s</span></div><div class="t" style="top:588px;font-size:14.61px;color:#f2f2f2;left:1743.40px;transform:scaleX(0.9174);transform-origin:left 0;">CL2 Junit</div><div class="t" style="top:614px;font-size:14.82px;color:#f2f2f2;left:1762.90px;transform:scaleX(0.9174);transform-origin:left 0;">10:13</div><div class="t" style="right:52.59999999999991px;top:614px;font-size:14.82px;color:#f2f2f2;text-align:right;transform:scaleX(0.9174);transform-origin:right 0">2<span style="font-size:11.45px;margin:0 1.7px 0 2px">m</span>23<span style="font-size:11.45px;margin-left:1.3px">s</span></div><div class="t" style="top:655px;font-size:14.61px;color:#f2f2f2;left:1048.40px;transform:scaleX(0.9174);transform-origin:left 0;">CL2 Package</div><div class="t" style="top:681px;font-size:14.82px;color:#f2f2f2;left:1067.90px;transform:scaleX(0.9174);transform-origin:left 0;">10:15</div><div class="t" style="right:747.5999999999999px;top:681px;font-size:14.82px;color:#f2f2f2;text-align:right;transform:scaleX(0.9174);transform-origin:right 0">2<span style="font-size:11.45px;margin:0 1.7px 0 2px">m</span>35<span style="font-size:11.45px;margin-left:1.3px">s</span></div><div class="t" style="top:655px;font-size:14.61px;color:#f2f2f2;left:1187.40px;transform:scaleX(0.9174);transform-origin:left 0;">CL2 Intergation Test</div><div class="t" style="top:681px;font-size:14.82px;color:#f2f2f2;left:1206.90px;transform:scaleX(0.9174);transform-origin:left 0;">10:18</div><div class="t" style="right:608.5999999999999px;top:681px;font-size:14.82px;color:#f2f2f2;text-align:right;transform:scaleX(0.9174);transform-origin:right 0">1<span style="font-size:11.45px;margin:0 1.7px 0 2px">m</span>16<span style="font-size:11.45px;margin-left:1.3px">s</span></div><div class="t" style="top:757px;font-size:11.5px;color:#f2f2f2;left:859.00px;width:300px;text-align:center;">Ronaldo</div><div class="t" style="top:731px;font-size:14.61px;color:#f2f2f2;left:1048.40px;transform:scaleX(0.9174);transform-origin:left 0;">CL1 Build</div><div class="t" style="top:757px;font-size:14.82px;color:#f2f2f2;left:1067.90px;transform:scaleX(0.9174);transform-origin:left 0;">10:01</div><div class="t" style="right:747.5999999999999px;top:757px;font-size:14.82px;color:#f2f2f2;text-align:right;transform:scaleX(0.9174);transform-origin:right 0">2<span style="font-size:11.45px;margin:0 1.7px 0 2px">m</span>36<span style="font-size:11.45px;margin-left:1.3px">s</span></div><div class="t" style="top:731px;font-size:14.61px;color:#f2f2f2;left:1187.40px;transform:scaleX(0.9174);transform-origin:left 0;">CL1 Junit</div><div class="t" style="top:757px;font-size:14.82px;color:#f2f2f2;left:1206.90px;transform:scaleX(0.9174);transform-origin:left 0;">10:03</div><div class="t" style="right:608.5999999999999px;top:757px;font-size:14.82px;color:#f2f2f2;text-align:right;transform:scaleX(0.9174);transform-origin:right 0">1<span style="font-size:11.45px;margin:0 1.7px 0 2px">m</span>48<span style="font-size:11.45px;margin-left:1.3px">s</span></div><div class="t" style="top:731px;font-size:14.61px;color:#f2f2f2;left:1326.40px;transform:scaleX(0.9174);transform-origin:left 0;">CL1 Package</div><div class="t" style="top:757px;font-size:14.82px;color:#f2f2f2;left:1345.90px;transform:scaleX(0.9174);transform-origin:left 0;">10:05</div><div class="t" style="right:469.5999999999999px;top:757px;font-size:14.82px;color:#f2f2f2;text-align:right;transform:scaleX(0.9174);transform-origin:right 0">2<span style="font-size:11.45px;margin:0 1.7px 0 2px">m</span>52<span style="font-size:11.45px;margin-left:1.3px">s</span></div><div class="t" style="top:731px;font-size:14.61px;color:#f2f2f2;left:1465.40px;transform:scaleX(0.9174);transform-origin:left 0;">CL1 Intergation Test</div><div class="t" style="top:757px;font-size:14.82px;color:#f2f2f2;left:1484.90px;transform:scaleX(0.9174);transform-origin:left 0;">10:08</div><div class="t" style="right:330.5999999999999px;top:757px;font-size:14.82px;color:#f2f2f2;text-align:right;transform:scaleX(0.9174);transform-origin:right 0">3<span style="font-size:11.45px;margin:0 1.7px 0 2px">m</span>37<span style="font-size:11.45px;margin-left:1.3px">s</span></div><div class="t" style="top:731px;font-size:14.61px;color:#f2f2f2;left:1604.40px;transform:scaleX(0.9174);transform-origin:left 0;">CL2 Build</div><div class="t" style="top:757px;font-size:14.82px;color:#f2f2f2;left:1623.90px;transform:scaleX(0.9174);transform-origin:left 0;">10:12</div><div class="t" style="right:191.5999999999999px;top:757px;font-size:14.82px;color:#f2f2f2;text-align:right;transform:scaleX(0.9174);transform-origin:right 0">1<span style="font-size:11.45px;margin:0 1.7px 0 2px">m</span>49<span style="font-size:11.45px;margin-left:1.3px">s</span></div><div class="t" style="top:731px;font-size:14.61px;color:#f2f2f2;left:1743.40px;transform:scaleX(0.9174);transform-origin:left 0;">CL2 Junit</div><div class="t" style="top:757px;font-size:14.82px;color:#f2f2f2;left:1762.90px;transform:scaleX(0.9174);transform-origin:left 0;">10:13</div><div class="t" style="right:52.59999999999991px;top:757px;font-size:14.82px;color:#f2f2f2;text-align:right;transform:scaleX(0.9174);transform-origin:right 0">2<span style="font-size:11.45px;margin:0 1.7px 0 2px">m</span>23<span style="font-size:11.45px;margin-left:1.3px">s</span></div><div class="t" style="top:798px;font-size:14.61px;color:#f2f2f2;left:1048.40px;transform:scaleX(0.9174);transform-origin:left 0;">CL2 Package</div><div class="t" style="top:824px;font-size:14.82px;color:#f2f2f2;left:1067.90px;transform:scaleX(0.9174);transform-origin:left 0;">10:15</div><div class="t" style="right:747.5999999999999px;top:824px;font-size:14.82px;color:#f2f2f2;text-align:right;transform:scaleX(0.9174);transform-origin:right 0">2<span style="font-size:11.45px;margin:0 1.7px 0 2px">m</span>35<span style="font-size:11.45px;margin-left:1.3px">s</span></div><div class="t" style="top:798px;font-size:14.61px;color:#f2f2f2;left:1187.40px;transform:scaleX(0.9174);transform-origin:left 0;">CL2 Intergation Test</div><div class="t" style="top:824px;font-size:14.82px;color:#f2f2f2;left:1206.90px;transform:scaleX(0.9174);transform-origin:left 0;">10:18</div><div class="t" style="right:608.5999999999999px;top:824px;font-size:14.82px;color:#f2f2f2;text-align:right;transform:scaleX(0.9174);transform-origin:right 0">1<span style="font-size:11.45px;margin:0 1.7px 0 2px">m</span>16<span style="font-size:11.45px;margin-left:1.3px">s</span></div><div class="t" style="top:798px;font-size:14.61px;color:#f2f2f2;left:1326.40px;transform:scaleX(0.9174);transform-origin:left 0;">CL3 Build</div><div class="t" style="top:824px;font-size:14.82px;color:#f2f2f2;left:1345.90px;transform:scaleX(0.9174);transform-origin:left 0;">10:20</div><div class="t" style="right:469.5999999999999px;top:824px;font-size:14.82px;color:#f2f2f2;text-align:right;transform:scaleX(0.9174);transform-origin:right 0">2<span style="font-size:11.45px;margin:0 1.7px 0 2px">m</span>48<span style="font-size:11.45px;margin-left:1.3px">s</span></div><div class="t" style="top:798px;font-size:14.61px;color:#c8c8c8;left:1465.40px;transform:scaleX(0.9174);transform-origin:left 0;">CL3 Junit</div><div class="t" style="top:798px;font-size:14.61px;color:#c8c8c8;left:1604.40px;transform:scaleX(0.9174);transform-origin:left 0;">CL3 Package</div><div class="t" style="top:798px;font-size:14.61px;color:#c8c8c8;left:1743.40px;transform:scaleX(0.9174);transform-origin:left 0;">CL3 Intergation Test</div><div class="t" style="top:865px;font-size:14.61px;color:#c8c8c8;left:1048.40px;transform:scaleX(0.9174);transform-origin:left 0;">Assembly &amp; Package</div><div class="t" style="top:865px;font-size:14.61px;color:#c8c8c8;left:1187.40px;transform:scaleX(0.9174);transform-origin:left 0;">Publish Artifacts</div><div class="t" style="top:865px;font-size:14.61px;color:#c8c8c8;left:1326.40px;transform:scaleX(0.9174);transform-origin:left 0;">Deploy for Func. Test</div><div class="t" style="top:865px;font-size:14.61px;color:#c8c8c8;left:1465.40px;transform:scaleX(0.9174);transform-origin:left 0;">Functional Test</div><div class="t" style="top:865px;font-size:14.61px;color:#c8c8c8;left:1604.40px;transform:scaleX(0.9174);transform-origin:left 0;">UAT</div><div class="t" style="top:865px;font-size:14.61px;color:#c8c8c8;left:1743.40px;transform:scaleX(0.9174);transform-origin:left 0;">Production</div><div class="t" style="top:967px;font-size:11.5px;color:#f2f2f2;left:859.00px;width:300px;text-align:center;">Mexi</div><div class="t" style="top:941px;font-size:14.61px;color:#f2f2f2;left:1048.40px;transform:scaleX(0.9174);transform-origin:left 0;">CL1 Build</div><div class="t" style="top:967px;font-size:14.82px;color:#f2f2f2;left:1067.90px;transform:scaleX(0.9174);transform-origin:left 0;">10:01</div><div class="t" style="right:747.5999999999999px;top:967px;font-size:14.82px;color:#f2f2f2;text-align:right;transform:scaleX(0.9174);transform-origin:right 0">2<span style="font-size:11.45px;margin:0 1.7px 0 2px">m</span>36<span style="font-size:11.45px;margin-left:1.3px">s</span></div><div class="t" style="top:941px;font-size:14.61px;color:#f2f2f2;left:1187.40px;transform:scaleX(0.9174);transform-origin:left 0;">CL1 Junit</div><div class="t" style="top:967px;font-size:14.82px;color:#f2f2f2;left:1206.90px;transform:scaleX(0.9174);transform-origin:left 0;">10:03</div><div class="t" style="right:608.5999999999999px;top:967px;font-size:14.82px;color:#f2f2f2;text-align:right;transform:scaleX(0.9174);transform-origin:right 0">1<span style="font-size:11.45px;margin:0 1.7px 0 2px">m</span>48<span style="font-size:11.45px;margin-left:1.3px">s</span></div><div class="t" style="top:941px;font-size:14.61px;color:#f2f2f2;left:1326.40px;transform:scaleX(0.9174);transform-origin:left 0;">CL1 Package</div><div class="t" style="top:967px;font-size:14.82px;color:#f2f2f2;left:1345.90px;transform:scaleX(0.9174);transform-origin:left 0;">10:05</div><div class="t" style="right:469.5999999999999px;top:967px;font-size:14.82px;color:#f2f2f2;text-align:right;transform:scaleX(0.9174);transform-origin:right 0">2<span style="font-size:11.45px;margin:0 1.7px 0 2px">m</span>52<span style="font-size:11.45px;margin-left:1.3px">s</span></div><div class="t" style="top:941px;font-size:14.61px;color:#f2f2f2;left:1465.40px;transform:scaleX(0.9174);transform-origin:left 0;">CL1 Intergation Test</div><div class="t" style="top:967px;font-size:14.82px;color:#f2f2f2;left:1484.90px;transform:scaleX(0.9174);transform-origin:left 0;">10:08</div><div class="t" style="right:330.5999999999999px;top:967px;font-size:14.82px;color:#f2f2f2;text-align:right;transform:scaleX(0.9174);transform-origin:right 0">3<span style="font-size:11.45px;margin:0 1.7px 0 2px">m</span>37<span style="font-size:11.45px;margin-left:1.3px">s</span></div><div class="t" style="top:1043px;font-size:11.5px;color:#f2f2f2;left:859.00px;width:300px;text-align:center;">Ibra</div><div class="t" style="top:1017px;font-size:14.61px;color:#f2f2f2;left:1048.40px;transform:scaleX(0.9174);transform-origin:left 0;">CL1 Build</div><div class="t" style="top:1043px;font-size:14.82px;color:#f2f2f2;left:1067.90px;transform:scaleX(0.9174);transform-origin:left 0;">10:01</div><div class="t" style="right:747.5999999999999px;top:1043px;font-size:14.82px;color:#f2f2f2;text-align:right;transform:scaleX(0.9174);transform-origin:right 0">2<span style="font-size:11.45px;margin:0 1.7px 0 2px">m</span>36<span style="font-size:11.45px;margin-left:1.3px">s</span></div><div class="t" style="top:1017px;font-size:14.61px;color:#f2f2f2;left:1187.40px;transform:scaleX(0.9174);transform-origin:left 0;">CL1 Junit</div><div class="t" style="top:1043px;font-size:14.82px;color:#f2f2f2;left:1206.90px;transform:scaleX(0.9174);transform-origin:left 0;">10:03</div><div class="t" style="right:608.5999999999999px;top:1043px;font-size:14.82px;color:#f2f2f2;text-align:right;transform:scaleX(0.9174);transform-origin:right 0">1<span style="font-size:11.45px;margin:0 1.7px 0 2px">m</span>48<span style="font-size:11.45px;margin-left:1.3px">s</span></div><div class="t" style="top:1017px;font-size:14.61px;color:#f2f2f2;left:1326.40px;transform:scaleX(0.9174);transform-origin:left 0;">CL1 Package</div><div class="t" style="top:1043px;font-size:14.82px;color:#f2f2f2;left:1345.90px;transform:scaleX(0.9174);transform-origin:left 0;">10:05</div><div class="t" style="right:469.5999999999999px;top:1043px;font-size:14.82px;color:#f2f2f2;text-align:right;transform:scaleX(0.9174);transform-origin:right 0">2<span style="font-size:11.45px;margin:0 1.7px 0 2px">m</span>52<span style="font-size:11.45px;margin-left:1.3px">s</span></div><div class="t" style="top:1017px;font-size:14.61px;color:#f2f2f2;left:1465.40px;transform:scaleX(0.9174);transform-origin:left 0;">CL1 Intergation Test</div><div class="t" style="top:1043px;font-size:14.82px;color:#f2f2f2;left:1484.90px;transform:scaleX(0.9174);transform-origin:left 0;">10:08</div><div class="t" style="right:330.5999999999999px;top:1043px;font-size:14.82px;color:#f2f2f2;text-align:right;transform:scaleX(0.9174);transform-origin:right 0">3<span style="font-size:11.45px;margin:0 1.7px 0 2px">m</span>37<span style="font-size:11.45px;margin-left:1.3px">s</span></div><div class="t" style="top:1017px;font-size:14.61px;color:#f2f2f2;left:1604.40px;transform:scaleX(0.9174);transform-origin:left 0;">CL2 Build</div><div class="t" style="top:1043px;font-size:14.82px;color:#f2f2f2;left:1623.90px;transform:scaleX(0.9174);transform-origin:left 0;">10:12</div><div class="t" style="right:191.5999999999999px;top:1043px;font-size:14.82px;color:#f2f2f2;text-align:right;transform:scaleX(0.9174);transform-origin:right 0">1<span style="font-size:11.45px;margin:0 1.7px 0 2px">m</span>49<span style="font-size:11.45px;margin-left:1.3px">s</span></div><div class="t" style="top:1017px;font-size:14.61px;color:#f2f2f2;left:1743.40px;transform:scaleX(0.9174);transform-origin:left 0;">CL2 Junit</div><div class="t" style="top:1043px;font-size:14.82px;color:#f2f2f2;left:1762.90px;transform:scaleX(0.9174);transform-origin:left 0;">10:13</div><div class="t" style="right:52.59999999999991px;top:1043px;font-size:14.82px;color:#f2f2f2;text-align:right;transform:scaleX(0.9174);transform-origin:right 0">2<span style="font-size:11.45px;margin:0 1.7px 0 2px">m</span>23<span style="font-size:11.45px;margin-left:1.3px">s</span></div><div class="t" style="top:1084px;font-size:14.61px;color:#f2f2f2;left:1048.40px;transform:scaleX(0.9174);transform-origin:left 0;">CL2 Package</div><div class="t" style="top:1110px;font-size:14.82px;color:#f2f2f2;left:1067.90px;transform:scaleX(0.9174);transform-origin:left 0;">10:15</div><div class="t" style="right:747.5999999999999px;top:1110px;font-size:14.82px;color:#f2f2f2;text-align:right;transform:scaleX(0.9174);transform-origin:right 0">2<span style="font-size:11.45px;margin:0 1.7px 0 2px">m</span>35<span style="font-size:11.45px;margin-left:1.3px">s</span></div><div class="t" style="top:1084px;font-size:14.61px;color:#f2f2f2;left:1187.40px;transform:scaleX(0.9174);transform-origin:left 0;">CL2 Intergation Test</div><div class="t" style="top:1110px;font-size:14.82px;color:#f2f2f2;left:1206.90px;transform:scaleX(0.9174);transform-origin:left 0;">10:18</div><div class="t" style="right:608.5999999999999px;top:1110px;font-size:14.82px;color:#f2f2f2;text-align:right;transform:scaleX(0.9174);transform-origin:right 0">1<span style="font-size:11.45px;margin:0 1.7px 0 2px">m</span>16<span style="font-size:11.45px;margin-left:1.3px">s</span></div><div class="t" style="top:1084px;font-size:14.61px;color:#f2f2f2;left:1326.40px;transform:scaleX(0.9174);transform-origin:left 0;">CL3 Build</div><div class="t" style="top:1110px;font-size:14.82px;color:#f2f2f2;left:1345.90px;transform:scaleX(0.9174);transform-origin:left 0;">10:20</div><div class="t" style="right:469.5999999999999px;top:1110px;font-size:14.82px;color:#f2f2f2;text-align:right;transform:scaleX(0.9174);transform-origin:right 0">2<span style="font-size:11.45px;margin:0 1.7px 0 2px">m</span>48<span style="font-size:11.45px;margin-left:1.3px">s</span></div><div class="t" style="top:1084px;font-size:14.61px;color:#f2f2f2;left:1465.40px;transform:scaleX(0.9174);transform-origin:left 0;">CL3 Junit</div><div class="t" style="top:1110px;font-size:14.82px;color:#f2f2f2;left:1484.90px;transform:scaleX(0.9174);transform-origin:left 0;">10:23</div><div class="t" style="right:330.5999999999999px;top:1110px;font-size:14.82px;color:#f2f2f2;text-align:right;transform:scaleX(0.9174);transform-origin:right 0">1<span style="font-size:11.45px;margin:0 1.7px 0 2px">m</span>59<span style="font-size:11.45px;margin-left:1.3px">s</span></div>
</div></div>
</body></html>
